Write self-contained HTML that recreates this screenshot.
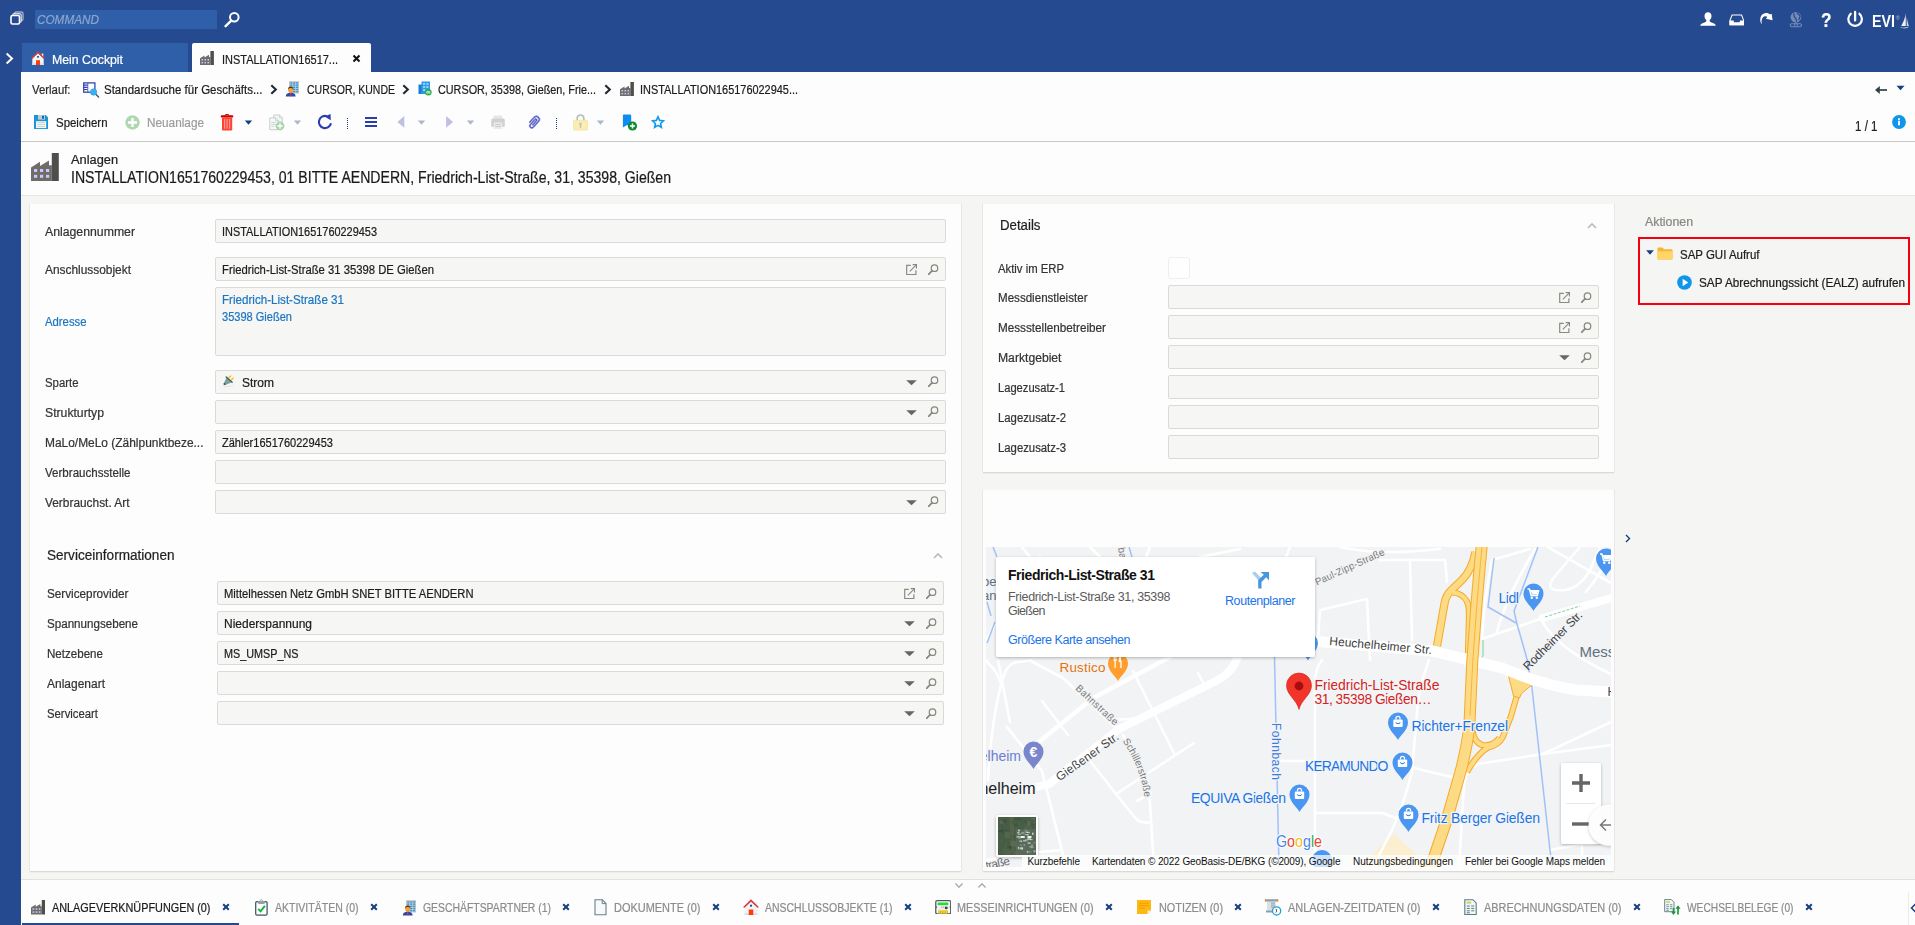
<!DOCTYPE html>
<html lang="de"><head><meta charset="utf-8"><title>Anlagen</title>
<style>
html,body{margin:0;padding:0;overflow:hidden}
body{width:1915px;height:925px;overflow:hidden;position:relative;background:#f5f5f3;font-family:"Liberation Sans", sans-serif;font-size:12px}
.a{position:absolute;display:block}
.t{position:absolute;white-space:pre;display:block;transform-origin:0 50%;-webkit-text-stroke:.22px}
</style></head><body>
<div class="a" style="left:0px;top:0px;width:1915px;height:72px;background:#254a8f;"></div>
<div class="a" style="left:0px;top:0px;width:21px;height:925px;background:#254a8f;"></div>
<div class="a" style="left:21px;top:72px;width:1894px;height:124px;background:#fdfdfd;"></div>
<div class="a" style="left:21px;top:141px;width:1894px;height:1px;background:#c9c7c3;"></div>
<div class="a" style="left:21px;top:195px;width:1894px;height:1px;background:#e6e5e2;"></div>
<svg class="a" style="left:10px;top:11px;" width="14" height="14" viewBox="0 0 14 14"><rect x="4.5" y="1" width="8.5" height="8.5" rx="1.5" fill="none" stroke="#fff" stroke-opacity=".55" stroke-width="1.4"/><rect x="2.7" y="2.7" width="8.5" height="8.5" rx="1.5" fill="#254a8f" stroke="#fff" stroke-opacity=".75" stroke-width="1.4"/><rect x="1" y="4.5" width="8.5" height="8.5" rx="1.5" fill="#254a8f" stroke="#fff" stroke-width="1.6"/></svg>
<div class="a" style="left:35px;top:10px;width:182px;height:19px;background:#2e5fa8;"></div>
<span class="t" style="left:37px;top:11.3px;font-size:12.5px;line-height:18px;color:#8ea5d0;font-style:italic;transform:scaleX(0.9398);">COMMAND</span>
<svg class="a" style="left:224px;top:11px;" width="17" height="17" viewBox="0 0 17 17"><circle cx="10.3" cy="6.3" r="4.3" fill="none" stroke="#fff" stroke-width="2"/><path d="M7.2 9.6 L1.6 15.2" stroke="#fff" stroke-width="2.4" stroke-linecap="round"/></svg>
<svg class="a" style="left:1699px;top:11px;" width="18" height="16" viewBox="0 0 18 16"><path d="M9 1.2c2.2 0 3.5 1.6 3.5 3.8 0 1.7-.8 3.3-1.8 4.1v1.1c0 .5 1 .9 3.2 1.7 1.6.6 2.6 1.3 2.9 2.9H1.200c.3-1.600 1.300-2.300 2.900-2.900 2.200-.8 3.200-1.200 3.200-1.700V9.100C6.300 8.300 5.500 6.700 5.500 5c0-2.200 1.300-3.800 3.500-3.800z" fill="#fff"/></svg>
<svg class="a" style="left:1728.5px;top:14.4px;" width="15.6" height="12" viewBox="0 0 17 13"><path d="M3.300 1.100h10.400l2.300 6v4.500H1V7.100z" fill="none" stroke="#fff" stroke-width="1.100" stroke-linejoin="round"/><path d="M.6 7h4.600v1.900h6.600V7h4.600v5.200H.6z" fill="#fff"/></svg>
<svg class="a" style="left:1758px;top:11px;" width="16" height="15" viewBox="0 0 16 15"><path d="M3.800 13.500C1 9.500 1.800 2.200 8 1.900c1.600 0 2.800.5 3.600 1.300l2.100-.2.900 6.200-6.700-1.500 1.500-1.800c-.8-.7-1.800-.9-2.800-.6-2.600.9-3.400 4.200-2.800 8.200z" fill="#fff"/></svg>
<svg class="a" style="left:1789px;top:11px;" width="14" height="17" viewBox="0 0 14 17"><g opacity=".36"><circle cx="6.900" cy="6.200" r="5.300" fill="#fff"/><path d="M4.500 2.500c1.500 1.500-.5 2.500 1.500 4s.5 3 2 4M8 1.500c.5 2 2.500 1.500 3 3.500s-1.500 2-1 4" fill="none" stroke="#254a8f" stroke-width="1.300"/><rect x="1.300" y="12.700" width="11.200" height="3" rx="1.500" fill="none" stroke="#fff" stroke-width="1.100"/><path d="M5.600 12.700v3M8.200 12.700v3" stroke="#fff" stroke-width="1"/><path d="M6.900 11.500v1.200" stroke="#fff" stroke-width="1.400"/></g></svg>
<span class="t" style="left:1820.5px;top:4.999999999999999px;font-size:21px;line-height:29px;color:#fff;font-weight:700;transform:scaleX(0.8185);">?</span>
<svg class="a" style="left:1846px;top:9.8px;" width="18" height="18" viewBox="0 0 18 18"><path d="M4.730 3.790A6.800 6.800 0 1 0 13.470 3.790" fill="none" stroke="#fff" stroke-width="2.200" stroke-linecap="round"/><path d="M9.100 1.900v8.500" stroke="#fff" stroke-width="2.300" stroke-linecap="round"/></svg>
<span class="t" style="left:1871.9px;top:9.5px;font-size:16.5px;line-height:23px;color:#fff;font-weight:700;transform:scaleX(0.8644);-webkit-text-stroke:0;">EVI</span>
<span class="t" style="left:1895.8px;top:13.8px;font-size:5.5px;line-height:8px;color:rgba(255,255,255,.62);-webkit-text-stroke:0;">®</span>
<svg class="a" style="left:1899px;top:12px;" width="11" height="17" viewBox="0 0 11 17"><path d="M6.700 1.300C6.200 5.500 4.600 10 2.200 13.900h4.600z" fill="#fff" opacity=".92"/><path d="M7.600 5c.6 3 1.300 6 2.200 8.900H7.700z" fill="#fff" opacity=".8"/><path d="M.6 15.300c3.200.7 6.800.3 9.800-.9-2.300 2.100-6.500 2.700-9.800.9z" fill="#fff"/></svg>
<svg class="a" style="left:5px;top:52px;" width="9" height="13" viewBox="0 0 9 13"><path d="M1.600 1.500L7 6.500 1.600 11.500" fill="none" stroke="#fff" stroke-width="2"/></svg>
<div class="a" style="left:22px;top:43px;width:166px;height:29px;background:#2e5fa8;"></div>
<div class="a" style="left:192px;top:43px;width:179px;height:29px;background:#fdfdfd;border-radius:2px 2px 0 0;"></div>
<svg class="a" style="left:31px;top:51px;" width="14" height="14" viewBox="0 0 14 14"><rect x="10.600" y="2.600" width="1.700" height="3.400" fill="#eef0f8"/><path d="M7 2.200L1.300 7.600V14h11.400V7.600z" fill="#f1f3fb"/><path d="M1.300 12.300h11.400V14H1.300z" fill="#dcdcf4"/><path d="M7 .3L.1 6.900l1 1L7 2.300l5.900 5.600 1-1z" fill="#d8403a"/><rect x="5" y="9.200" width="4" height="4.800" fill="#ff3d00"/><rect x="6.200" y="5" width="1.600" height="1.700" fill="#1c3f7c"/></svg>
<span class="t" style="left:52px;top:50.8px;font-size:12.5px;line-height:18px;color:#fff;transform:scaleX(0.9827);">Mein Cockpit</span>
<svg class="a" style="left:200px;top:51px;" width="14" height="14" viewBox="0 0 14 14"><path d="M0 14V7.300l4.500-2.900v2.100l4.500-2.700v2.300h1.400V14z" fill="#706d68"/><path d="M10.400 0h3.500v14h-3.500z" fill="#4e4e4c"/><g fill="#c8c8ff"><rect x="1.500" y="8" width="1.600" height="1.500"/><rect x="4.500" y="8" width="1.600" height="1.500"/><rect x="7.500" y="8" width="1.600" height="1.500"/><rect x="1.500" y="10.900" width="1.600" height="1.500"/><rect x="4.500" y="10.900" width="1.600" height="1.500"/><rect x="7.500" y="10.900" width="1.600" height="1.500"/></g></svg>
<span class="t" style="left:222px;top:50.8px;font-size:12.5px;line-height:18px;color:#1c1c1c;transform:scaleX(0.8772);">INSTALLATION16517...</span>
<svg class="a" style="left:352px;top:54px;" width="9" height="9" viewBox="0 0 9 9"><path d="M1.500 1.500l6 6M7.500 1.500l-6 6" stroke="#111" stroke-width="2"/></svg>
<span class="t" style="left:32px;top:81.3px;font-size:12.5px;line-height:18px;color:#2a2a2a;transform:scaleX(0.9082);">Verlauf:</span>
<svg class="a" style="left:83px;top:81.5px;" width="17" height="16" viewBox="0 0 17 16"><rect x=".7" y=".9" width="11.200" height="9.300" fill="#fff" stroke="#3545b0" stroke-width="1.300"/><path d="M4.800 1v9" stroke="#3545b0" stroke-width=".8"/><path d="M1 3.100h3.600M1 5.300h3.600M1 7.500h3.600" stroke="#3545b0" stroke-width="1.200"/><path d="M12 11.600l3.600 3.500" stroke="#4a5560" stroke-width="1.400" stroke-linecap="round"/><circle cx="10.600" cy="10" r="3.200" fill="#35b4f0" stroke="#2b9be0" stroke-width=".6"/></svg>
<span class="t" style="left:104px;top:81.3px;font-size:12.5px;line-height:18px;color:#1c1c1c;transform:scaleX(0.9198);">Standardsuche für Geschäfts...</span>
<svg class="a" style="left:270px;top:84px;" width="8" height="11" viewBox="0 0 8 11"><path d="M1.300 1.300L5.800 5.500 1.300 9.700" fill="none" stroke="#1f2933" stroke-width="2.100"/></svg>
<svg class="a" style="left:285px;top:80px;" width="14" height="17" viewBox="0 0 14 17"><rect x="4" y="1.200" width="10" height="12.300" fill="#c9c5bd"/><g fill="#1e9af0"><rect x="5.3" y="2.3" width="2" height="1.300"/><rect x="5.3" y="4.5" width="2" height="1.300"/><rect x="5.3" y="6.7" width="2" height="1.300"/><rect x="5.3" y="8.9" width="2" height="1.300"/><rect x="5.3" y="11.1" width="2" height="1.300"/><rect x="8.2" y="2.3" width="2" height="1.300"/><rect x="8.2" y="4.5" width="2" height="1.300"/><rect x="8.2" y="6.7" width="2" height="1.300"/><rect x="8.2" y="8.9" width="2" height="1.300"/><rect x="8.2" y="11.1" width="2" height="1.300"/><rect x="11.1" y="2.3" width="2" height="1.300"/><rect x="11.1" y="4.5" width="2" height="1.300"/><rect x="11.1" y="6.7" width="2" height="1.300"/><rect x="11.1" y="8.9" width="2" height="1.300"/><rect x="11.1" y="11.1" width="2" height="1.300"/></g><path d="M.8 16.600c0-2.600 1.600-3.800 4.900-3.800s4.900 1.200 4.900 3.800z" fill="#2848b8"/><path d="M5 12.900h1.400l-.2 3.400h-1z" fill="#e03a2a"/><circle cx="5.700" cy="10" r="2.600" fill="#f5a030"/><path d="M3 9.600c-.2-2.200 1.200-3.200 2.700-3.200s2.900 1 2.700 3.200c-.9-1.200-1.800-1.500-2.700-1.500s-1.800.3-2.700 1.500z" fill="#4e3422"/></svg>
<span class="t" style="left:306.5px;top:81.3px;font-size:12.5px;line-height:18px;color:#1c1c1c;transform:scaleX(0.8391);">CURSOR, KUNDE</span>
<svg class="a" style="left:402px;top:84px;" width="8" height="11" viewBox="0 0 8 11"><path d="M1.300 1.300L5.800 5.500 1.300 9.700" fill="none" stroke="#1f2933" stroke-width="2.100"/></svg>
<svg class="a" style="left:418px;top:81px;" width="14" height="15" viewBox="0 0 14 15"><rect x=".5" y="3.500" width="4.500" height="9.500" fill="#1e7fd0"/><rect x="3.500" y=".5" width="8.500" height="12.500" fill="#2f9ae8"/><g fill="#8fd0ff"><rect x="5" y="2" width="2.200" height="2"/><rect x="8.300" y="2" width="2.200" height="2"/><rect x="5" y="5" width="2.200" height="2"/><rect x="8.300" y="5" width="2.200" height="2"/><rect x="5" y="8" width="2.200" height="2"/></g><circle cx="10.300" cy="11.200" r="3.300" fill="#2cab4a"/><path d="M8.800 12.600v-2.200h3v2.200M9.700 12.600v-1h1.200v1" fill="none" stroke="#d9ffe0" stroke-width=".8"/></svg>
<span class="t" style="left:438px;top:81.3px;font-size:12.5px;line-height:18px;color:#1c1c1c;transform:scaleX(0.8648);">CURSOR, 35398, Gießen, Frie...</span>
<svg class="a" style="left:604px;top:84px;" width="8" height="11" viewBox="0 0 8 11"><path d="M1.300 1.300L5.800 5.500 1.300 9.700" fill="none" stroke="#1f2933" stroke-width="2.100"/></svg>
<svg class="a" style="left:620px;top:82px;" width="14" height="14" viewBox="0 0 14 14"><path d="M0 14V7.300l4.500-2.900v2.100l4.500-2.700v2.300h1.400V14z" fill="#706d68"/><path d="M10.400 0h3.500v14h-3.500z" fill="#4e4e4c"/><g fill="#c8c8ff"><rect x="1.500" y="8" width="1.600" height="1.500"/><rect x="4.500" y="8" width="1.600" height="1.500"/><rect x="7.500" y="8" width="1.600" height="1.500"/><rect x="1.500" y="10.900" width="1.600" height="1.500"/><rect x="4.500" y="10.900" width="1.600" height="1.500"/><rect x="7.500" y="10.900" width="1.600" height="1.500"/></g></svg>
<span class="t" style="left:640px;top:81.3px;font-size:12.5px;line-height:18px;color:#1c1c1c;transform:scaleX(0.8734);">INSTALLATION165176022945...</span>
<svg class="a" style="left:1874px;top:85px;" width="14" height="10" viewBox="0 0 14 10"><path d="M13 5H3.500" stroke="#2f4247" stroke-width="1.700"/><path d="M5.800 1L1 5l4.800 4z" fill="#2f4247"/></svg>
<svg class="a" style="left:1896px;top:85px;" width="9" height="6" viewBox="0 0 9 6"><path d="M.5 .8h8L4.500 5.200z" fill="#173f83"/></svg>
<svg class="a" style="left:34px;top:115px;" width="14" height="14" viewBox="0 0 14 14"><path d="M0 0h11.800L14 2.200V14H0z" fill="#1a96d8"/><rect x="4" y="0" width="7" height="4.600" fill="#c3cacd"/><rect x="8" y=".8" width="2" height="2.900" fill="#0d6c9c"/><rect x="2.100" y="6.200" width="10.100" height="6.900" fill="#fff"/><path d="M3.200 7.700h7.800M3.200 9.700h7.800M3.200 11.700h7.800" stroke="#b9c9c5" stroke-width=".9"/></svg>
<span class="t" style="left:56px;top:113.8px;font-size:12.5px;line-height:18px;color:#1c1c1c;transform:scaleX(0.9148);">Speichern</span>
<svg class="a" style="left:124.5px;top:114.5px;" width="15" height="15" viewBox="0 0 15 15"><circle cx="7.500" cy="7.500" r="7.200" fill="#b0d8b0"/><path d="M7.500 3v9M3 7.500h9" stroke="#fff" stroke-width="2.300"/></svg>
<span class="t" style="left:147px;top:113.8px;font-size:12.5px;line-height:18px;color:#9c9c9c;transform:scaleX(0.9426);">Neuanlage</span>
<svg class="a" style="left:220px;top:113.5px;" width="14" height="17" viewBox="0 0 14 17"><path d="M4.800 1.600c0-.8.600-1.100 2.200-1.100s2.200.3 2.200 1.100" fill="none" stroke="#d40000" stroke-width="1"/><rect x=".7" y="1.300" width="12.600" height="2.100" rx="1" fill="#cc0000"/><path d="M2 3.400h10.200v11.800c0 .8-.5 1.300-1.300 1.300H3.300c-.8 0-1.300-.5-1.300-1.300z" fill="#ff4232"/><path d="M4.600 5v9.800M7.100 5v9.800M9.600 5v9.800" stroke="#ff9a90" stroke-width="1.200"/></svg>
<svg class="a" style="left:244px;top:119.9px;" width="9" height="6" viewBox="0 0 9 6"><path d="M.8 .5h7.400L4.500 4.700z" fill="#10407f"/></svg>
<svg class="a" style="left:268.5px;top:113.5px;" width="17" height="17" viewBox="0 0 17 17"><path d="M4.800 .9h5.700l2.800 2.800v8.300H4.800z" fill="#f3f5f5" stroke="#c4cece" stroke-width=".9"/><path d="M10.500 .9v2.800h2.800" fill="none" stroke="#c4cece" stroke-width=".8"/><path d="M.8 3.900h5.700l2.800 2.800v9H.8z" fill="#f8fafa" stroke="#bcc8c8" stroke-width=".9"/><path d="M6.500 3.900v2.800h2.800" fill="none" stroke="#bcc8c8" stroke-width=".8"/><path d="M2.300 8.400h4.600M2.300 10.400h4.600M2.300 12.400h3" stroke="#c4cece" stroke-width=".9"/><circle cx="11" cy="12" r="4.400" fill="#a8d5a8"/><path d="M11 9.300v5.400M8.300 12h5.400" stroke="#fff" stroke-width="1.400"/></svg>
<svg class="a" style="left:293.2px;top:119.9px;" width="9" height="6" viewBox="0 0 9 6"><path d="M.8 .5h7.400L4.500 4.700z" fill="#a9b8d2"/></svg>
<svg class="a" style="left:317px;top:113px;" width="16" height="17" viewBox="0 0 16 17"><path d="M14 10.300A6.100 6.100 0 1 1 9.800 3.200" fill="none" stroke="#2a3eb0" stroke-width="2.100"/><path d="M7.600 3.600L13.500 .9l.3 6.300z" fill="#2a3eb0"/></svg>
<svg class="a" style="left:347px;top:118px;" width="1" height="12" viewBox="0 0 1 12"><rect x="0" y="0" width="1" height="1" fill="#0c4282"/><rect x="0" y="2" width="1" height="1" fill="#0c4282"/><rect x="0" y="4" width="1" height="1" fill="#0c4282"/><rect x="0" y="6" width="1" height="1" fill="#0c4282"/><rect x="0" y="8" width="1" height="1" fill="#0c4282"/><rect x="0" y="10" width="1" height="1" fill="#0c4282"/></svg>
<svg class="a" style="left:365px;top:116px;" width="13" height="12" viewBox="0 0 13 12"><path d="M0 2h12M0 6h12M0 10h12" stroke="#2a3eb0" stroke-width="2"/></svg>
<svg class="a" style="left:397px;top:116px;" width="8" height="12" viewBox="0 0 8 12"><path d="M7.300 0v11.800L.3 5.900z" fill="#bfc0e3"/></svg>
<svg class="a" style="left:417.1px;top:119.9px;" width="9" height="6" viewBox="0 0 9 6"><path d="M.8 .5h7.400L4.500 4.700z" fill="#a9b8d2"/></svg>
<svg class="a" style="left:446px;top:116px;" width="8" height="12" viewBox="0 0 8 12"><path d="M.1 0v11.800L7.100 5.900z" fill="#bfc0e3"/></svg>
<svg class="a" style="left:466px;top:119.9px;" width="9" height="6" viewBox="0 0 9 6"><path d="M.8 .5h7.400L4.500 4.700z" fill="#a9b8d2"/></svg>
<svg class="a" style="left:491px;top:114.5px;" width="14" height="15" viewBox="0 0 14 15"><rect x="2.600" y=".4" width="8.800" height="4" rx=".8" fill="#e6e6e6"/><rect x=".2" y="3.400" width="13.600" height="8.600" rx="1.600" fill="#d2d2d0"/><rect x="2.800" y="7.400" width="8.400" height="6.600" rx=".6" fill="#ececea"/><path d="M4.200 9.600h5.600M4.200 11.600h5.600" stroke="#c6c6c4" stroke-width=".9"/><circle cx="11.800" cy="5.200" r=".6" fill="#9fdcc0"/></svg>
<svg class="a" style="left:527px;top:114.5px;" width="14" height="14" viewBox="0 0 14 14"><g transform="rotate(42 7 7)" fill="none"><path d="M4 10.600V3.600a3 3 0 0 1 6 0v7.700a2 2 0 0 1-4 0V4.400a1 1 0 0 1 2 0v6.200" stroke="#9aa0e2" stroke-width="1.900"/><path d="M4 10.600V3.600a3 3 0 0 1 6 0v7.700a2 2 0 0 1-4 0V4.400a1 1 0 0 1 2 0v6.200" stroke="#3a44b4" stroke-width=".75"/></g></svg>
<svg class="a" style="left:556px;top:118px;" width="1" height="12" viewBox="0 0 1 12"><rect x="0" y="0" width="1" height="1" fill="#0c4282"/><rect x="0" y="2" width="1" height="1" fill="#0c4282"/><rect x="0" y="4" width="1" height="1" fill="#0c4282"/><rect x="0" y="6" width="1" height="1" fill="#0c4282"/><rect x="0" y="8" width="1" height="1" fill="#0c4282"/><rect x="0" y="10" width="1" height="1" fill="#0c4282"/></svg>
<svg class="a" style="left:572.5px;top:113.5px;" width="15" height="17" viewBox="0 0 15 17"><path d="M4.200 7V4.300a3.300 3.300 0 0 1 6.600 0V7" fill="none" stroke="#b4bcbc" stroke-width="1.700"/><rect x=".6" y="6.200" width="13.800" height="9.800" rx="1" fill="#fbeeb0" stroke="#f1e19c" stroke-width=".8"/><circle cx="7.500" cy="9.800" r="1.200" fill="#bcc4c8"/><path d="M7.500 10v3.400" stroke="#bcc4c8" stroke-width="1.500" stroke-linecap="round"/></svg>
<svg class="a" style="left:596.1px;top:119.9px;" width="9" height="6" viewBox="0 0 9 6"><path d="M.8 .5h7.400L4.500 4.700z" fill="#a9b8d2"/></svg>
<svg class="a" style="left:622px;top:113.5px;" width="17" height="18" viewBox="0 0 17 18"><path d="M.9 1.800C.9 .9 1.400 .5 2.200 .5h5.700c.8 0 1.300.4 1.300 1.300v11.700L5.050 11 .9 13.500z" fill="#0f8cf0"/><circle cx="10.500" cy="12" r="4.600" fill="#0c8a30"/><path d="M10.500 9.400v5.200M7.900 12h5.200" stroke="#fff" stroke-width="1.500"/></svg>
<svg class="a" style="left:651px;top:115px;" width="14" height="14" viewBox="0 0 14 14"><path d="M7 1.800l1.600 3.600 3.900.4-2.900 2.650.8 3.850L7 10.350 3.600 12.300l.8-3.850L1.500 5.800l3.900-.4z" fill="none" stroke="#0f9af0" stroke-width="1.600" stroke-linejoin="miter"/></svg>
<span class="t" style="left:1855px;top:115.5px;font-size:14px;line-height:20px;color:#222;transform:scaleX(0.8257);">1 / 1</span>
<svg class="a" style="left:1892px;top:115px;" width="14" height="14" viewBox="0 0 14 14"><circle cx="7" cy="7" r="6.900" fill="#0f95ea"/><rect x="6" y="5.700" width="2" height="4.600" fill="#e8f5ff"/><rect x="6" y="3.200" width="2" height="1.700" fill="#e8f5ff"/></svg>
<svg class="a" style="left:31px;top:153px;" width="28" height="28" viewBox="0 0 14 14"><path d="M0 14V7.300l4.500-2.900v2.100l4.500-2.700v2.300h1.400V14z" fill="#706d68"/><path d="M10.400 0h3.500v14h-3.500z" fill="#4e4e4c"/><g fill="#c8c8ff"><rect x="1.500" y="8" width="1.600" height="1.500"/><rect x="4.500" y="8" width="1.600" height="1.500"/><rect x="7.500" y="8" width="1.600" height="1.500"/><rect x="1.500" y="10.900" width="1.600" height="1.500"/><rect x="4.500" y="10.900" width="1.600" height="1.500"/><rect x="7.500" y="10.900" width="1.600" height="1.500"/></g></svg>
<span class="t" style="left:71px;top:151.3px;font-size:12.5px;line-height:18px;color:#222;transform:scaleX(1.0245);">Anlagen</span>
<span class="t" style="left:71px;top:167.3px;font-size:16px;line-height:22px;color:#1a1a1a;transform:scaleX(0.8804);">INSTALLATION1651760229453, 01 BITTE AENDERN, Friedrich-List-Straße, 31, 35398, Gießen</span>
<div class="a" style="left:30px;top:204px;width:931px;height:667px;background:#fdfdfd;box-shadow:1px 0 0 #e9e7e4,-1px 0 0 #e9e7e4,0 1px 0 #dcdad6,0 2px 1px rgba(0,0,0,.03);"></div>
<div class="a" style="left:215px;top:219px;width:731px;height:24px;background:#f6f6f4;border:1px solid #dcdad6;box-sizing:border-box;border-radius:2px;"></div>
<span class="t" style="left:45px;top:223.3px;font-size:12.5px;line-height:18px;color:#333333;transform:scaleX(0.9813);">Anlagennummer</span>
<span class="t" style="left:222px;top:223.3px;font-size:12.5px;line-height:18px;color:#1c1c1c;transform:scaleX(0.8735);">INSTALLATION1651760229453</span>
<div class="a" style="left:215px;top:257px;width:731px;height:24px;background:#f6f6f4;border:1px solid #dcdad6;box-sizing:border-box;border-radius:2px;"></div>
<span class="t" style="left:45px;top:261.3px;font-size:12.5px;line-height:18px;color:#333333;transform:scaleX(0.9521);">Anschlussobjekt</span>
<span class="t" style="left:222px;top:261.3px;font-size:12.5px;line-height:18px;color:#1c1c1c;transform:scaleX(0.9028);">Friedrich-List-Straße 31 35398 DE Gießen</span>
<svg class="a" style="left:905.5px;top:263.5px;" width="11" height="11" viewBox="0 0 11 11"><path d="M4.800 1.300H.7v9.200h9.200V6.200" fill="none" stroke="#8a8680" stroke-width="1.150"/><path d="M6.700 .6h3.800v3.800" fill="none" stroke="#8a8680" stroke-width="1.150"/><path d="M10.300 .8L3.800 7.300" stroke="#8a8680" stroke-width="1.100"/></svg>
<svg class="a" style="left:927.5px;top:263.5px;" width="11" height="11" viewBox="0 0 11 11"><circle cx="6.500" cy="4.200" r="3.250" fill="none" stroke="#8a8680" stroke-width="1.250"/><path d="M4.100 6.700L.6 10.300" stroke="#8a8680" stroke-width="1.700" stroke-linecap="round"/></svg>
<div class="a" style="left:215px;top:287px;width:731px;height:69px;background:#f6f6f4;border:1px solid #dcdad6;box-sizing:border-box;border-radius:2px;"></div>
<span class="t" style="left:45px;top:313.3px;font-size:12.5px;line-height:18px;color:#1b76c4;transform:scaleX(0.9049);">Adresse</span>
<span class="t" style="left:222px;top:291.1px;font-size:12.5px;line-height:18px;color:#1b76c4;transform:scaleX(0.9292);">Friedrich-List-Straße 31</span>
<span class="t" style="left:222px;top:308.2px;font-size:12.5px;line-height:18px;color:#1b76c4;transform:scaleX(0.8835);">35398 Gießen</span>
<div class="a" style="left:215px;top:370px;width:731px;height:24px;background:#f6f6f4;border:1px solid #dcdad6;box-sizing:border-box;border-radius:2px;"></div>
<span class="t" style="left:45px;top:374.3px;font-size:12.5px;line-height:18px;color:#333333;transform:scaleX(0.9092);">Sparte</span>
<span class="t" style="left:242px;top:374.3px;font-size:12.5px;line-height:18px;color:#1c1c1c;transform:scaleX(0.9597);">Strom</span>
<svg class="a" style="left:905.5px;top:380px;" width="11" height="6" viewBox="0 0 11 6"><path d="M.2 .3h10.600L5.500 5.300z" fill="#666"/></svg>
<svg class="a" style="left:927.5px;top:376.0px;" width="11" height="11" viewBox="0 0 11 11"><circle cx="6.500" cy="4.200" r="3.250" fill="none" stroke="#8a8680" stroke-width="1.250"/><path d="M4.100 6.700L.6 10.300" stroke="#8a8680" stroke-width="1.700" stroke-linecap="round"/></svg>
<div class="a" style="left:215px;top:400px;width:731px;height:24px;background:#f6f6f4;border:1px solid #dcdad6;box-sizing:border-box;border-radius:2px;"></div>
<span class="t" style="left:45px;top:404.3px;font-size:12.5px;line-height:18px;color:#333333;transform:scaleX(0.9762);">Strukturtyp</span>
<svg class="a" style="left:905.5px;top:410px;" width="11" height="6" viewBox="0 0 11 6"><path d="M.2 .3h10.600L5.500 5.300z" fill="#666"/></svg>
<svg class="a" style="left:927.5px;top:406.0px;" width="11" height="11" viewBox="0 0 11 11"><circle cx="6.500" cy="4.200" r="3.250" fill="none" stroke="#8a8680" stroke-width="1.250"/><path d="M4.100 6.700L.6 10.300" stroke="#8a8680" stroke-width="1.700" stroke-linecap="round"/></svg>
<div class="a" style="left:215px;top:430px;width:731px;height:24px;background:#f6f6f4;border:1px solid #dcdad6;box-sizing:border-box;border-radius:2px;"></div>
<span class="t" style="left:45px;top:434.3px;font-size:12.5px;line-height:18px;color:#333333;transform:scaleX(0.9544);">MaLo/MeLo (Zählpunktbeze...</span>
<span class="t" style="left:222px;top:434.3px;font-size:12.5px;line-height:18px;color:#1c1c1c;transform:scaleX(0.8823);">Zähler1651760229453</span>
<div class="a" style="left:215px;top:460px;width:731px;height:24px;background:#f6f6f4;border:1px solid #dcdad6;box-sizing:border-box;border-radius:2px;"></div>
<span class="t" style="left:45px;top:464.3px;font-size:12.5px;line-height:18px;color:#333333;transform:scaleX(0.9251);">Verbrauchsstelle</span>
<div class="a" style="left:215px;top:490px;width:731px;height:24px;background:#f6f6f4;border:1px solid #dcdad6;box-sizing:border-box;border-radius:2px;"></div>
<span class="t" style="left:45px;top:494.3px;font-size:12.5px;line-height:18px;color:#333333;transform:scaleX(0.9501);">Verbrauchst. Art</span>
<svg class="a" style="left:905.5px;top:500px;" width="11" height="6" viewBox="0 0 11 6"><path d="M.2 .3h10.600L5.500 5.300z" fill="#666"/></svg>
<svg class="a" style="left:927.5px;top:496.0px;" width="11" height="11" viewBox="0 0 11 11"><circle cx="6.500" cy="4.200" r="3.250" fill="none" stroke="#8a8680" stroke-width="1.250"/><path d="M4.100 6.700L.6 10.300" stroke="#8a8680" stroke-width="1.700" stroke-linecap="round"/></svg>
<svg class="a" style="left:222px;top:375px;" width="12" height="13" viewBox="0 0 12 13"><path d="M1.300 10.600Q.8 12.300 5.500 11.700T11 10.200" fill="none" stroke="#dde4e4" stroke-width=".9"/><path d="M6.700 2.600L8.700 1M9.200 5L11.100 3.300" stroke="#ffc020" stroke-width="1.500" stroke-linecap="round"/><path d="M4.600 2.600L9.500 7.400 3.200 10 1.700 8.500z" fill="#7ea0a0"/><path d="M4.200 1.900L10.100 7.300" stroke="#3d6060" stroke-width="1.400" stroke-linecap="round"/><circle cx="2.600" cy="9.100" r="1.150" fill="#3d6060"/></svg>
<span class="t" style="left:47px;top:545.0999999999999px;font-size:14px;line-height:20px;color:#1f1f1f;transform:scaleX(0.9695);">Serviceinformationen</span>
<svg class="a" style="left:933px;top:552.2px;" width="10" height="8" viewBox="0 0 10 8"><path d="M1 6l4-4 4 4" fill="none" stroke="#bdbab5" stroke-width="1.600"/></svg>
<div class="a" style="left:217px;top:581px;width:727px;height:24px;background:#f6f6f4;border:1px solid #dcdad6;box-sizing:border-box;border-radius:2px;"></div>
<span class="t" style="left:47px;top:585.3px;font-size:12.5px;line-height:18px;color:#333333;transform:scaleX(0.9385);">Serviceprovider</span>
<span class="t" style="left:224px;top:585.3px;font-size:12.5px;line-height:18px;color:#1c1c1c;transform:scaleX(0.8964);">Mittelhessen Netz GmbH SNET BITTE AENDERN</span>
<svg class="a" style="left:903.5px;top:587.5px;" width="11" height="11" viewBox="0 0 11 11"><path d="M4.800 1.300H.7v9.200h9.200V6.200" fill="none" stroke="#8a8680" stroke-width="1.150"/><path d="M6.700 .6h3.800v3.800" fill="none" stroke="#8a8680" stroke-width="1.150"/><path d="M10.300 .8L3.800 7.300" stroke="#8a8680" stroke-width="1.100"/></svg>
<svg class="a" style="left:925.5px;top:587.5px;" width="11" height="11" viewBox="0 0 11 11"><circle cx="6.500" cy="4.200" r="3.250" fill="none" stroke="#8a8680" stroke-width="1.250"/><path d="M4.100 6.700L.6 10.300" stroke="#8a8680" stroke-width="1.700" stroke-linecap="round"/></svg>
<div class="a" style="left:217px;top:611px;width:727px;height:24px;background:#f6f6f4;border:1px solid #dcdad6;box-sizing:border-box;border-radius:2px;"></div>
<span class="t" style="left:47px;top:615.3px;font-size:12.5px;line-height:18px;color:#333333;transform:scaleX(0.9284);">Spannungsebene</span>
<span class="t" style="left:224px;top:615.3px;font-size:12.5px;line-height:18px;color:#1c1c1c;transform:scaleX(0.9591);">Niederspannung</span>
<svg class="a" style="left:903.5px;top:621px;" width="11" height="6" viewBox="0 0 11 6"><path d="M.2 .3h10.600L5.500 5.300z" fill="#666"/></svg>
<svg class="a" style="left:925.5px;top:617.5px;" width="11" height="11" viewBox="0 0 11 11"><circle cx="6.500" cy="4.200" r="3.250" fill="none" stroke="#8a8680" stroke-width="1.250"/><path d="M4.100 6.700L.6 10.300" stroke="#8a8680" stroke-width="1.700" stroke-linecap="round"/></svg>
<div class="a" style="left:217px;top:641px;width:727px;height:24px;background:#f6f6f4;border:1px solid #dcdad6;box-sizing:border-box;border-radius:2px;"></div>
<span class="t" style="left:47px;top:645.3px;font-size:12.5px;line-height:18px;color:#333333;transform:scaleX(0.9261);">Netzebene</span>
<span class="t" style="left:224px;top:645.3px;font-size:12.5px;line-height:18px;color:#1c1c1c;transform:scaleX(0.8649);">MS_UMSP_NS</span>
<svg class="a" style="left:903.5px;top:651px;" width="11" height="6" viewBox="0 0 11 6"><path d="M.2 .3h10.600L5.500 5.300z" fill="#666"/></svg>
<svg class="a" style="left:925.5px;top:647.5px;" width="11" height="11" viewBox="0 0 11 11"><circle cx="6.500" cy="4.200" r="3.250" fill="none" stroke="#8a8680" stroke-width="1.250"/><path d="M4.100 6.700L.6 10.300" stroke="#8a8680" stroke-width="1.700" stroke-linecap="round"/></svg>
<div class="a" style="left:217px;top:671px;width:727px;height:24px;background:#f6f6f4;border:1px solid #dcdad6;box-sizing:border-box;border-radius:2px;"></div>
<span class="t" style="left:47px;top:675.3px;font-size:12.5px;line-height:18px;color:#333333;transform:scaleX(0.9592);">Anlagenart</span>
<svg class="a" style="left:903.5px;top:681px;" width="11" height="6" viewBox="0 0 11 6"><path d="M.2 .3h10.600L5.500 5.300z" fill="#666"/></svg>
<svg class="a" style="left:925.5px;top:677.5px;" width="11" height="11" viewBox="0 0 11 11"><circle cx="6.500" cy="4.200" r="3.250" fill="none" stroke="#8a8680" stroke-width="1.250"/><path d="M4.100 6.700L.6 10.300" stroke="#8a8680" stroke-width="1.700" stroke-linecap="round"/></svg>
<div class="a" style="left:217px;top:701px;width:727px;height:24px;background:#f6f6f4;border:1px solid #dcdad6;box-sizing:border-box;border-radius:2px;"></div>
<span class="t" style="left:47px;top:705.3px;font-size:12.5px;line-height:18px;color:#333333;transform:scaleX(0.9062);">Serviceart</span>
<svg class="a" style="left:903.5px;top:711px;" width="11" height="6" viewBox="0 0 11 6"><path d="M.2 .3h10.600L5.500 5.300z" fill="#666"/></svg>
<svg class="a" style="left:925.5px;top:707.5px;" width="11" height="11" viewBox="0 0 11 11"><circle cx="6.500" cy="4.200" r="3.250" fill="none" stroke="#8a8680" stroke-width="1.250"/><path d="M4.100 6.700L.6 10.300" stroke="#8a8680" stroke-width="1.700" stroke-linecap="round"/></svg>
<div class="a" style="left:983px;top:204px;width:631px;height:268px;background:#fdfdfd;box-shadow:1px 0 0 #e9e7e4,-1px 0 0 #e9e7e4,0 1px 0 #dcdad6,0 2px 1px rgba(0,0,0,.03);"></div>
<span class="t" style="left:1000px;top:215.10000000000002px;font-size:14px;line-height:20px;color:#1f1f1f;transform:scaleX(0.9463);">Details</span>
<svg class="a" style="left:1587px;top:221.5px;" width="10" height="8" viewBox="0 0 10 8"><path d="M1 6l4-4 4 4" fill="none" stroke="#bdbab5" stroke-width="1.600"/></svg>
<span class="t" style="left:998px;top:260.3px;font-size:12.5px;line-height:18px;color:#333333;transform:scaleX(0.9049);">Aktiv im ERP</span>
<div class="a" style="left:1168px;top:257px;width:22px;height:22px;background:#fefefe;border:1px solid #f0efed;box-sizing:border-box;border-radius:3px;"></div>
<div class="a" style="left:1168px;top:285px;width:431px;height:24px;background:#f6f6f4;border:1px solid #dcdad6;box-sizing:border-box;border-radius:2px;"></div>
<span class="t" style="left:998px;top:289.3px;font-size:12.5px;line-height:18px;color:#333333;transform:scaleX(0.9267);">Messdienstleister</span>
<svg class="a" style="left:1558.5px;top:291.5px;" width="11" height="11" viewBox="0 0 11 11"><path d="M4.800 1.300H.7v9.200h9.200V6.200" fill="none" stroke="#8a8680" stroke-width="1.150"/><path d="M6.700 .6h3.800v3.800" fill="none" stroke="#8a8680" stroke-width="1.150"/><path d="M10.300 .8L3.800 7.300" stroke="#8a8680" stroke-width="1.100"/></svg>
<svg class="a" style="left:1580.5px;top:291.5px;" width="11" height="11" viewBox="0 0 11 11"><circle cx="6.500" cy="4.200" r="3.250" fill="none" stroke="#8a8680" stroke-width="1.250"/><path d="M4.100 6.700L.6 10.300" stroke="#8a8680" stroke-width="1.700" stroke-linecap="round"/></svg>
<div class="a" style="left:1168px;top:315px;width:431px;height:24px;background:#f6f6f4;border:1px solid #dcdad6;box-sizing:border-box;border-radius:2px;"></div>
<span class="t" style="left:998px;top:319.3px;font-size:12.5px;line-height:18px;color:#333333;transform:scaleX(0.9363);">Messstellenbetreiber</span>
<svg class="a" style="left:1558.5px;top:321.5px;" width="11" height="11" viewBox="0 0 11 11"><path d="M4.800 1.300H.7v9.200h9.200V6.200" fill="none" stroke="#8a8680" stroke-width="1.150"/><path d="M6.700 .6h3.800v3.800" fill="none" stroke="#8a8680" stroke-width="1.150"/><path d="M10.300 .8L3.800 7.300" stroke="#8a8680" stroke-width="1.100"/></svg>
<svg class="a" style="left:1580.5px;top:321.5px;" width="11" height="11" viewBox="0 0 11 11"><circle cx="6.500" cy="4.200" r="3.250" fill="none" stroke="#8a8680" stroke-width="1.250"/><path d="M4.100 6.700L.6 10.300" stroke="#8a8680" stroke-width="1.700" stroke-linecap="round"/></svg>
<div class="a" style="left:1168px;top:345px;width:431px;height:24px;background:#f6f6f4;border:1px solid #dcdad6;box-sizing:border-box;border-radius:2px;"></div>
<span class="t" style="left:998px;top:349.3px;font-size:12.5px;line-height:18px;color:#333333;transform:scaleX(0.9722);">Marktgebiet</span>
<svg class="a" style="left:1558.5px;top:355px;" width="11" height="6" viewBox="0 0 11 6"><path d="M.2 .3h10.600L5.500 5.300z" fill="#666"/></svg>
<svg class="a" style="left:1580.5px;top:351.5px;" width="11" height="11" viewBox="0 0 11 11"><circle cx="6.500" cy="4.200" r="3.250" fill="none" stroke="#8a8680" stroke-width="1.250"/><path d="M4.100 6.700L.6 10.300" stroke="#8a8680" stroke-width="1.700" stroke-linecap="round"/></svg>
<div class="a" style="left:1168px;top:375px;width:431px;height:24px;background:#f6f6f4;border:1px solid #dcdad6;box-sizing:border-box;border-radius:2px;"></div>
<span class="t" style="left:998px;top:379.3px;font-size:12.5px;line-height:18px;color:#333333;transform:scaleX(0.8926);">Lagezusatz-1</span>
<div class="a" style="left:1168px;top:405px;width:431px;height:24px;background:#f6f6f4;border:1px solid #dcdad6;box-sizing:border-box;border-radius:2px;"></div>
<span class="t" style="left:998px;top:409.3px;font-size:12.5px;line-height:18px;color:#333333;transform:scaleX(0.9059);">Lagezusatz-2</span>
<div class="a" style="left:1168px;top:435px;width:431px;height:24px;background:#f6f6f4;border:1px solid #dcdad6;box-sizing:border-box;border-radius:2px;"></div>
<span class="t" style="left:998px;top:439.3px;font-size:12.5px;line-height:18px;color:#333333;transform:scaleX(0.9059);">Lagezusatz-3</span>
<span class="t" style="left:1645px;top:213.0px;font-size:12.5px;line-height:18px;color:#8a8680;transform:scaleX(0.9865);">Aktionen</span>
<div class="a" style="left:1638px;top:237px;width:272px;height:68px;border:2px solid #f6000f;box-sizing:border-box;"></div>
<svg class="a" style="left:1646px;top:249.7px;" width="8" height="5" viewBox="0 0 8 5"><path d="M.2 .3h7.600L4 4.700z" fill="#173f83"/></svg>
<svg class="a" style="left:1657px;top:247px;" width="16" height="13" viewBox="0 0 16 13"><path d="M.5 1.500C.5 .9.900.5 1.500.5h4l1.500 1.700h7.500c.6 0 1 .4 1 1v8.300c0 .6-.4 1-1 1h-13c-.6 0-1-.4-1-1z" fill="#f2b535"/><path d="M.5 4.200h15v7.300c0 .6-.4 1-1 1h-13c-.6 0-1-.4-1-1z" fill="#ffd568"/></svg>
<span class="t" style="left:1680px;top:246.3px;font-size:12.5px;line-height:18px;color:#1c1c1c;transform:scaleX(0.9177);">SAP GUI Aufruf</span>
<svg class="a" style="left:1676.6px;top:274.7px;" width="15" height="15" viewBox="0 0 15 15"><circle cx="7.500" cy="7.500" r="7.300" fill="#0f95ea"/><path d="M5.600 3.800v7.400L11.300 7.500z" fill="#fff"/></svg>
<span class="t" style="left:1699px;top:274.3px;font-size:12.5px;line-height:18px;color:#1c1c1c;transform:scaleX(0.9392);">SAP Abrechnungssicht (EALZ) aufrufen</span>
<svg class="a" style="left:1625px;top:534px;" width="6" height="9" viewBox="0 0 6 9"><path d="M1 1l3.500 3.500L1 8" fill="none" stroke="#173f83" stroke-width="1.400"/></svg>
<div class="a" style="left:983px;top:490px;width:631px;height:381px;background:#fdfdfd;box-shadow:1px 0 0 #e9e7e4,-1px 0 0 #e9e7e4,0 1px 0 #dcdad6,0 2px 1px rgba(0,0,0,.03);"></div>
<svg class="a" style="left:986px;top:547px" width="625" height="320" viewBox="986 547 625 320"><defs><filter id="sh" x="-20%" y="-20%" width="140%" height="150%"><feDropShadow dx="0" dy="1" stdDeviation="1.600" flood-color="#000" flood-opacity=".28"/></filter><clipPath id="mc"><rect x="986" y="547" width="625" height="320"/></clipPath></defs><g clip-path="url(#mc)"><rect x="986" y="547" width="625" height="320" fill="#f1f3f4"/><path d="M1359 867L1394 834L1430 867z" fill="#fcefcf"/><path d="M988 780C990 740 996 700 1003 678S1020 664 1031 660" fill="none" stroke="#fff" stroke-width="2.6" stroke-linecap="round" stroke-linejoin="round"/><path d="M998 660L1010 722" fill="none" stroke="#fff" stroke-width="2.6" stroke-linecap="round" stroke-linejoin="round"/><path d="M1031 661L1063 678L1116 728" fill="none" stroke="#fff" stroke-width="2.6" stroke-linecap="round" stroke-linejoin="round"/><path d="M1123 735L1147 778L1150 804L1154 867" fill="none" stroke="#fff" stroke-width="2.6" stroke-linecap="round" stroke-linejoin="round"/><path d="M1042 701L1068 735" fill="none" stroke="#fff" stroke-width="2.6" stroke-linecap="round" stroke-linejoin="round"/><path d="M1007 727L1042 771L1066 867" fill="none" stroke="#fff" stroke-width="2.6" stroke-linecap="round" stroke-linejoin="round"/><path d="M1133 671L1175 755" fill="none" stroke="#fff" stroke-width="2.6" stroke-linecap="round" stroke-linejoin="round"/><path d="M1194 743L1116 794" fill="none" stroke="#fff" stroke-width="2.6" stroke-linecap="round" stroke-linejoin="round"/><path d="M1091 762L1116 794L1137 820Q1144 824 1151 822" fill="none" stroke="#fff" stroke-width="2.6" stroke-linecap="round" stroke-linejoin="round"/><path d="M1137 801L1151 793" fill="none" stroke="#fff" stroke-width="2.6" stroke-linecap="round" stroke-linejoin="round"/><path d="M1114 719Q1135 722 1154 709" fill="none" stroke="#fff" stroke-width="2.6" stroke-linecap="round" stroke-linejoin="round"/><path d="M1198 673L1204 684" fill="none" stroke="#fff" stroke-width="2.6" stroke-linecap="round" stroke-linejoin="round"/><path d="M1281 761L1315 761" fill="none" stroke="#fff" stroke-width="2.6" stroke-linecap="round" stroke-linejoin="round"/><path d="M986 860L1040 852L1062 850" fill="none" stroke="#fff" stroke-width="2.6" stroke-linecap="round" stroke-linejoin="round"/><path d="M986 640L1010 600L1040 557" fill="none" stroke="#fff" stroke-width="2.6" stroke-linecap="round" stroke-linejoin="round"/><path d="M1022 547L1030 557" fill="none" stroke="#fff" stroke-width="2.6" stroke-linecap="round" stroke-linejoin="round"/><path d="M1090 547L1100 557" fill="none" stroke="#fff" stroke-width="2.6" stroke-linecap="round" stroke-linejoin="round"/><path d="M1150 547L1146 557" fill="none" stroke="#fff" stroke-width="2.6" stroke-linecap="round" stroke-linejoin="round"/><path d="M1200 557L1240 549" fill="none" stroke="#fff" stroke-width="2.6" stroke-linecap="round" stroke-linejoin="round"/><path d="M1290 547L1286 557" fill="none" stroke="#fff" stroke-width="2.6" stroke-linecap="round" stroke-linejoin="round"/><path d="M986 660L996 672L1004 690" fill="none" stroke="#fff" stroke-width="2.6" stroke-linecap="round" stroke-linejoin="round"/><path d="M1322 660Q1316 668 1315 680L1315 867" fill="none" stroke="#fff" stroke-width="2.6" stroke-linecap="round" stroke-linejoin="round"/><path d="M1429 660Q1418 690 1417 712L1412 771Q1404 805 1391 832L1373 867" fill="none" stroke="#fff" stroke-width="2.6" stroke-linecap="round" stroke-linejoin="round"/><path d="M1315 813L1382 813L1396 818" fill="none" stroke="#fff" stroke-width="2.6" stroke-linecap="round" stroke-linejoin="round"/><path d="M1414 768L1452 777" fill="none" stroke="#fff" stroke-width="2.6" stroke-linecap="round" stroke-linejoin="round"/><path d="M1459 867L1464 785Q1466 768 1478 764L1543 754L1611 722" fill="none" stroke="#fff" stroke-width="2.6" stroke-linecap="round" stroke-linejoin="round"/><path d="M1543 754L1611 745" fill="none" stroke="#fff" stroke-width="2.6" stroke-linecap="round" stroke-linejoin="round"/><path d="M1550 850L1582 844L1611 842" fill="none" stroke="#fff" stroke-width="2.6" stroke-linecap="round" stroke-linejoin="round"/><path d="M1582 844L1582 867" fill="none" stroke="#fff" stroke-width="2.6" stroke-linecap="round" stroke-linejoin="round"/><path d="M1320 610L1367 599L1370 660" fill="none" stroke="#fff" stroke-width="2.6" stroke-linecap="round" stroke-linejoin="round"/><path d="M1320 610L1318 640" fill="none" stroke="#fff" stroke-width="2.6" stroke-linecap="round" stroke-linejoin="round"/><path d="M1380 560L1445 560L1447 582" fill="none" stroke="#fff" stroke-width="2.6" stroke-linecap="round" stroke-linejoin="round"/><path d="M1410 560L1412 640" fill="none" stroke="#fff" stroke-width="2.6" stroke-linecap="round" stroke-linejoin="round"/><path d="M1340 547Q1380 556 1440 549" fill="none" stroke="#fff" stroke-width="2.6" stroke-linecap="round" stroke-linejoin="round"/><path d="M1482 639L1543 618" fill="none" stroke="#fff" stroke-width="2.6" stroke-linecap="round" stroke-linejoin="round"/><path d="M1482 639Q1484 600 1492 560L1530 549" fill="none" stroke="#fff" stroke-width="2.6" stroke-linecap="round" stroke-linejoin="round"/><path d="M1497 632Q1505 600 1535 549" fill="none" stroke="#fff" stroke-width="2.6" stroke-linecap="round" stroke-linejoin="round"/><path d="M1543 623Q1560 650 1611 674" fill="none" stroke="#fff" stroke-width="2.6" stroke-linecap="round" stroke-linejoin="round"/><path d="M1548 547L1611 583" fill="none" stroke="#fff" stroke-width="2.6" stroke-linecap="round" stroke-linejoin="round"/><path d="M1580 547Q1560 570 1552 580Q1545 592 1565 590Q1580 588 1590 570L1600 547" fill="none" stroke="#fff" stroke-width="2.6" stroke-linecap="round" stroke-linejoin="round"/><path d="M1586 592Q1596 580 1604 566" fill="none" stroke="#fff" stroke-width="2.6" stroke-linecap="round" stroke-linejoin="round"/><path d="M1040 741L1093 698L1170 657" fill="none" stroke="#fff" stroke-width="4.5" stroke-linecap="round" stroke-linejoin="round"/><path d="M1543 618L1611 598" fill="none" stroke="#fff" stroke-width="8" stroke-linecap="round" stroke-linejoin="round"/><path d="M986 792Q1020 792 1049 784L1119 729L1216 681Q1234 672 1238 655" fill="none" stroke="#fff" stroke-width="8" stroke-linecap="round" stroke-linejoin="round"/><path d="M1538 547L1514 611L1517 624L1527 659L1532 688L1550 850L1552 867" fill="none" stroke="#a1c2f8" stroke-width="1.500"/><path d="M1494 558L1488 607L1516 623" fill="none" stroke="#a1c2f8" stroke-width="1.500"/><path d="M1274.500 657L1279 867" fill="none" stroke="#a1c2f8" stroke-width="1.500"/><path d="M993 547L997 557" fill="none" stroke="#a1c2f8" stroke-width="1.500"/><path d="M987 602L991 616" fill="none" stroke="#a1c2f8" stroke-width="1.500"/><path d="M995 622L987 643" fill="none" stroke="#a1c2f8" stroke-width="1.500"/><path d="M1129 547L1132 557" fill="none" stroke="#a1c2f8" stroke-width="1.500"/><path d="M1483 640L1483 656L1479 660" fill="none" stroke="#7fcf9a" stroke-width="1"/><path d="M1545 617L1580 606" fill="none" stroke="#7fcf9a" stroke-width="1" stroke-dasharray="3 1.5"/><path d="M1437 646L1444.600 603Q1446 595 1452 589.500L1462 580Q1472 570 1475.500 552" fill="none" stroke="#f7a928" stroke-width="8.2" stroke-linecap="butt" stroke-linejoin="round"/><path d="M1452.500 592.500Q1462 593 1466.700 601Q1469.300 606 1469 616L1468 653" fill="none" stroke="#f7a928" stroke-width="6.2" stroke-linecap="butt" stroke-linejoin="round"/><path d="M1518 692L1510.800 716.700L1502.800 737Q1499 745 1488 747.500Q1477 754 1467 772" fill="none" stroke="#f7a928" stroke-width="6.2" stroke-linecap="butt" stroke-linejoin="round"/><path d="M1472.500 731Q1474 742 1482 745Q1492 747 1499.500 738" fill="none" stroke="#f7a928" stroke-width="6.2" stroke-linecap="butt" stroke-linejoin="round"/><path d="M1437 646L1444.600 603Q1446 595 1452 589.500L1462 580Q1472 570 1475.500 552" fill="none" stroke="#fddb85" stroke-width="6.2" stroke-linecap="butt" stroke-linejoin="round"/><path d="M1452.500 592.500Q1462 593 1466.700 601Q1469.300 606 1469 616L1468 653" fill="none" stroke="#fddb85" stroke-width="4.2" stroke-linecap="butt" stroke-linejoin="round"/><path d="M1518 692L1510.800 716.700L1502.800 737Q1499 745 1488 747.500Q1477 754 1467 772" fill="none" stroke="#fddb85" stroke-width="4.2" stroke-linecap="butt" stroke-linejoin="round"/><path d="M1472.500 731Q1474 742 1482 745Q1492 747 1499.500 738" fill="none" stroke="#fddb85" stroke-width="4.2" stroke-linecap="butt" stroke-linejoin="round"/><path d="M1508.500 676L1533 684L1521.500 693.500L1519.500 698L1513.500 696z" fill="#fddb85" stroke="#f7a928" stroke-width="1"/><path d="M1300 640L1432 651L1502 668Q1540 684 1576 690L1611 692" fill="none" stroke="#fff" stroke-width="11" stroke-linecap="round" stroke-linejoin="round"/><path d="M1522 674L1532 681" fill="none" stroke="#fff" stroke-width="8" stroke-linecap="round" stroke-linejoin="round"/><path d="M1481.700 546Q1478.500 580 1476.600 603L1472.300 661L1469.300 728Q1466 752 1460 773.500L1447 819L1434.800 855L1430 869" fill="none" stroke="#f7a928" stroke-width="12" stroke-linejoin="round"/><path d="M1481.700 546Q1478.500 580 1476.600 603L1472.300 661L1469.300 728Q1466 752 1460 773.500L1447 819L1434.800 855L1430 869" fill="none" stroke="#fddb85" stroke-width="10" stroke-linejoin="round"/><path d="M1482 546Q1479 580 1477 603L1472.800 661L1470 716" fill="none" stroke="#f7a928" stroke-width=".8"/><text x="1317" y="585.5" font-size="10" fill="#787878" font-family='"Liberation Sans", sans-serif' textLength="75" lengthAdjust="spacing" transform="rotate(-24.5 1317 585.5)" stroke="#f1f3f4" stroke-width="2.500" paint-order="stroke" stroke-linejoin="round">Paul-Zipp-Straße</text><text x="1329" y="645" font-size="12" fill="#3c4043" font-family='"Liberation Sans", sans-serif' textLength="103" lengthAdjust="spacing" transform="rotate(5 1329 645)">Heuchelheimer Str.</text><text x="1528" y="671" font-size="12" fill="#3c4043" font-family='"Liberation Sans", sans-serif' textLength="78" lengthAdjust="spacing" transform="rotate(-45 1528 671)">Rodheimer Str.</text><text x="1075" y="689" font-size="10" fill="#787878" font-family='"Liberation Sans", sans-serif' textLength="54" lengthAdjust="spacing" transform="rotate(43 1075 689)" stroke="#f1f3f4" stroke-width="2.500" paint-order="stroke" stroke-linejoin="round">Bahnstraße</text><text x="1059.5" y="781.5" font-size="12" fill="#3c4043" font-family='"Liberation Sans", sans-serif' textLength="74" lengthAdjust="spacing" transform="rotate(-35.5 1059.5 781.5)">Gießener Str.</text><path id="sp" d="M1122.500 741Q1141 768 1144.500 797" fill="none"/><text font-size="10" fill="#787878" font-family='"Liberation Sans", sans-serif' stroke="#f1f3f4" stroke-width="2.500" paint-order="stroke"><textPath href="#sp" textLength="61" lengthAdjust="spacing">Schillerstraße</textPath></text><text x="1272" y="723" font-size="12" fill="#3d7be0" font-family='"Liberation Sans", sans-serif' textLength="57" lengthAdjust="spacing" transform="rotate(90 1272 723)" stroke="#f1f3f4" stroke-width="2.500" paint-order="stroke" stroke-linejoin="round">Fohnbach</text><text x="986.5" y="869.5" font-size="11.5" fill="#666b70" font-family='"Liberation Sans", sans-serif' textLength="24.5" lengthAdjust="spacing" transform="rotate(-12 986.5 869.5)">traße</text><text x="1118" y="548" font-size="10" fill="#787878" font-family='"Liberation Sans", sans-serif' transform="rotate(80 1118 548)" stroke="#f1f3f4" stroke-width="2.500" paint-order="stroke" stroke-linejoin="round">ba</text><text x="996.5" y="585.5" font-size="13" fill="#5f7180" font-family='"Liberation Sans", sans-serif' text-anchor="end">be</text><text x="996.5" y="600" font-size="13" fill="#5f7180" font-family='"Liberation Sans", sans-serif' text-anchor="end">an</text><text x="1021" y="761" font-size="14" fill="#6c80d2" font-family='"Liberation Sans", sans-serif' text-anchor="end" stroke="#f1f3f4" stroke-width="2.500" paint-order="stroke" stroke-linejoin="round">Heuchelheim</text><text x="1035.5" y="793.5" font-size="16" fill="#202124" font-family='"Liberation Sans", sans-serif' text-anchor="end" stroke="#f1f3f4" stroke-width="2.500" paint-order="stroke" stroke-linejoin="round">Heuchelheim</text><text x="1579.5" y="657" font-size="15" fill="#5f7180" font-family='"Liberation Sans", sans-serif'>Messe Gießen</text><text x="1607.5" y="695.5" font-size="12" fill="#3c4043" font-family='"Liberation Sans", sans-serif'>Heuchelheimer Str.</text><text x="1059.5" y="671.5" font-size="13.5" fill="#e8710a" font-family='"Liberation Sans", sans-serif' textLength="46" lengthAdjust="spacing" stroke="#f1f3f4" stroke-width="2.500" paint-order="stroke" stroke-linejoin="round">Rustico</text><text x="1498.5" y="603" font-size="14.5" fill="#1a73e8" font-family='"Liberation Sans", sans-serif' textLength="20.5" lengthAdjust="spacing" stroke="#f1f3f4" stroke-width="2.500" paint-order="stroke" stroke-linejoin="round">Lidl</text><text x="1411.5" y="731" font-size="14" fill="#1a73e8" font-family='"Liberation Sans", sans-serif' textLength="96.5" lengthAdjust="spacing" stroke="#f1f3f4" stroke-width="2.500" paint-order="stroke" stroke-linejoin="round">Richter+Frenzel</text><text x="1305" y="771" font-size="14" fill="#1a73e8" font-family='"Liberation Sans", sans-serif' textLength="83.5" lengthAdjust="spacing" stroke="#f1f3f4" stroke-width="2.500" paint-order="stroke" stroke-linejoin="round">KERAMUNDO</text><text x="1191" y="803" font-size="14" fill="#1a73e8" font-family='"Liberation Sans", sans-serif' textLength="95" lengthAdjust="spacing" stroke="#f1f3f4" stroke-width="2.500" paint-order="stroke" stroke-linejoin="round">EQUIVA Gießen</text><text x="1421.5" y="823" font-size="14" fill="#1a73e8" font-family='"Liberation Sans", sans-serif' textLength="118.5" lengthAdjust="spacing" stroke="#f1f3f4" stroke-width="2.500" paint-order="stroke" stroke-linejoin="round">Fritz Berger Gießen</text><text x="1314.5" y="690" font-size="14" fill="#d3231f" font-family='"Liberation Sans", sans-serif' textLength="125" lengthAdjust="spacing" stroke="#f1f3f4" stroke-width="2.500" paint-order="stroke" stroke-linejoin="round">Friedrich-List-Straße</text><text x="1314.5" y="703.5" font-size="14" fill="#d3231f" font-family='"Liberation Sans", sans-serif' textLength="117" lengthAdjust="spacing" stroke="#f1f3f4" stroke-width="2.500" paint-order="stroke" stroke-linejoin="round">31, 35398 Gießen…</text><path d="M1398 740.0C1396 735.5 1388 730.0 1388 722.5A10 10 0 1 1 1408 722.5C1408 730.0 1400 735.5 1398 740.0z" fill="#4a96f0"/><rect x="1393.3" y="719.5" width="9.400" height="7.600" rx="1" fill="#fff"/><path d="M1396 719.5v-1.200a2 2 0 0 1 4 0v1.200" fill="none" stroke="#fff" stroke-width="1.300"/><path d="M1395.7 722.5q2.300 2.600 4.600 0" fill="none" stroke="#1a73e8" stroke-width="1.100"/><path d="M1402.5 780.0C1400.5 775.5 1392.5 770.0 1392.5 762.5A10 10 0 1 1 1412.5 762.5C1412.5 770.0 1404.5 775.5 1402.5 780.0z" fill="#4a96f0"/><rect x="1397.8" y="759.5" width="9.400" height="7.600" rx="1" fill="#fff"/><path d="M1400.5 759.5v-1.200a2 2 0 0 1 4 0v1.200" fill="none" stroke="#fff" stroke-width="1.300"/><path d="M1400.2 762.5q2.300 2.600 4.600 0" fill="none" stroke="#1a73e8" stroke-width="1.100"/><path d="M1299.5 812.0C1297.5 807.5 1289.5 802.0 1289.5 794.5A10 10 0 1 1 1309.5 794.5C1309.5 802.0 1301.5 807.5 1299.5 812.0z" fill="#4a96f0"/><rect x="1294.8" y="791.5" width="9.400" height="7.600" rx="1" fill="#fff"/><path d="M1297.5 791.5v-1.200a2 2 0 0 1 4 0v1.200" fill="none" stroke="#fff" stroke-width="1.300"/><path d="M1297.2 794.5q2.300 2.600 4.600 0" fill="none" stroke="#1a73e8" stroke-width="1.100"/><path d="M1408.5 832.0C1406.5 827.5 1398.5 822.0 1398.5 814.5A10 10 0 1 1 1418.5 814.5C1418.5 822.0 1410.5 827.5 1408.5 832.0z" fill="#4a96f0"/><rect x="1403.8" y="811.5" width="9.400" height="7.600" rx="1" fill="#fff"/><path d="M1406.5 811.5v-1.200a2 2 0 0 1 4 0v1.200" fill="none" stroke="#fff" stroke-width="1.300"/><path d="M1406.2 814.5q2.300 2.600 4.600 0" fill="none" stroke="#1a73e8" stroke-width="1.100"/><path d="M1533.5 611.0C1531.5 606.5 1523.5 601.0 1523.5 593.5A10 10 0 1 1 1543.5 593.5C1543.5 601.0 1535.5 606.5 1533.5 611.0z" fill="#4a96f0"/><path d="M1527.5 589.0h2l1.600 6.500h6.200l1.400-4.700h-8.700" fill="none" stroke="#fff" stroke-width="1.500" stroke-linejoin="round"/><path d="M1530.9 591.0h7l-1 3.500h-5z" fill="#fff"/><circle cx="1531.8" cy="597.7" r="1.200" fill="#fff"/><circle cx="1536.8" cy="597.7" r="1.200" fill="#fff"/><path d="M1606 576.0C1604 571.5 1596 566.0 1596 558.5A10 10 0 1 1 1616 558.5C1616 566.0 1608 571.5 1606 576.0z" fill="#4a96f0"/><path d="M1600 554.0h2l1.600 6.500h6.200l1.400-4.700h-8.700" fill="none" stroke="#fff" stroke-width="1.500" stroke-linejoin="round"/><path d="M1603.4 556.0h7l-1 3.500h-5z" fill="#fff"/><circle cx="1604.3" cy="562.7" r="1.200" fill="#fff"/><circle cx="1609.3" cy="562.7" r="1.200" fill="#fff"/><path d="M1322 877.5C1320 873.0 1312 867.5 1312 860A10 10 0 1 1 1332 860C1332 867.5 1324 873.0 1322 877.5z" fill="#4a96f0"/><path d="M1308 660.5C1306 656.0 1298 650.5 1298 643A10 10 0 1 1 1318 643C1318 650.5 1310 656.0 1308 660.5z" fill="#4a96f0"/><path d="M1118 681.0C1116 676.5 1108 671.0 1108 663.5A10 10 0 1 1 1128 663.5C1128 671.0 1120 676.5 1118 681.0z" fill="#ff9e2c"/><path d="M1114.200 656.500v4.500M1116 656.500v4.500M1114.200 660.500h1.800M1115.100 660.500v7.500" stroke="#fff" stroke-width="1.200" fill="none"/><path d="M1121 656.500c-1.600.5-1.800 3-1.600 5h1.600v6.500" stroke="#fff" stroke-width="1.300" fill="#fff"/><path d="M1033.5 769.0C1031.5 764.5 1023.5 759.0 1023.5 751.5A10 10 0 1 1 1043.5 751.5C1043.5 759.0 1035.5 764.5 1033.5 769.0z" fill="#7986cb"/><text x="1033.500" y="756.500" font-size="14" font-weight="700" fill="#fff" text-anchor="middle" font-family='"Liberation Sans", sans-serif'>€</text><path d="M1299 709.500C1297 700 1286.500 695 1286.500 685.500A12.500 12.500 0 0 1 1311.500 685.500C1311.500 695 1301 700 1299 709.500z" fill="#f3342a" stroke="#d3231f" stroke-width=".6"/><circle cx="1299" cy="686" r="4.400" fill="#a50e0e"/><text x="1276" y="846.500" font-size="16" font-family='"Liberation Sans", sans-serif' textLength="46" lengthAdjust="spacingAndGlyphs" stroke="#fff" stroke-width="2" paint-order="stroke"><tspan fill="#4285f4">G</tspan><tspan fill="#ea4335">o</tspan><tspan fill="#fbbc05">o</tspan><tspan fill="#4285f4">g</tspan><tspan fill="#34a853">l</tspan><tspan fill="#ea4335">e</tspan></text><rect x="996" y="815" width="42" height="42" rx="2.500" fill="#fff" filter="url(#sh)"/><rect x="998" y="817" width="38" height="38" fill="#465c45"/><rect x="1013.8" y="836.6" width="6.1" height="3.8" fill="#50604c" opacity=".8"/><rect x="1027.9" y="823.6" width="5.5" height="3.9" fill="#405840" opacity=".8"/><rect x="1001.3" y="827.6" width="2.0" height="5.5" fill="#3b533b" opacity=".8"/><rect x="1018.8" y="830.9" width="3.8" height="5.2" fill="#405840" opacity=".8"/><rect x="1019.8" y="846.1" width="1.8" height="1.7" fill="#57694f" opacity=".8"/><rect x="1019.0" y="844.2" width="3.1" height="4.5" fill="#57694f" opacity=".8"/><rect x="1016.2" y="839.4" width="4.0" height="4.8" fill="#384c3c" opacity=".8"/><rect x="1020.9" y="831.2" width="4.3" height="6.2" fill="#4d6549" opacity=".8"/><rect x="1022.8" y="828.0" width="2.6" height="2.9" fill="#4d6549" opacity=".8"/><rect x="1017.7" y="820.8" width="2.0" height="3.0" fill="#4d6549" opacity=".8"/><rect x="1031.5" y="846.7" width="1.5" height="2.5" fill="#3b533b" opacity=".8"/><rect x="1014.4" y="851.3" width="3.5" height="1.9" fill="#57694f" opacity=".8"/><rect x="1025.2" y="826.4" width="1.9" height="3.2" fill="#5e6f58" opacity=".8"/><rect x="1024.5" y="821.1" width="2.7" height="2.0" fill="#3b533b" opacity=".8"/><rect x="1014.3" y="834.0" width="4.9" height="2.4" fill="#50604c" opacity=".8"/><rect x="1004.7" y="842.6" width="2.2" height="4.7" fill="#4d6549" opacity=".8"/><rect x="1011.8" y="851.7" width="1.5" height="3.3" fill="#35493a" opacity=".8"/><rect x="1032.9" y="817.7" width="2.4" height="6.5" fill="#4d6549" opacity=".8"/><rect x="999.5" y="822.1" width="3.7" height="1.5" fill="#4a6046" opacity=".8"/><rect x="1027.1" y="830.5" width="1.9" height="2.5" fill="#57694f" opacity=".8"/><rect x="998.5" y="829.9" width="4.6" height="2.1" fill="#384c3c" opacity=".8"/><rect x="1027.1" y="821.8" width="3.4" height="4.6" fill="#35493a" opacity=".8"/><rect x="1029.8" y="845.6" width="2.7" height="2.4" fill="#50604c" opacity=".8"/><rect x="1004.9" y="850.3" width="5.9" height="4.5" fill="#5e6f58" opacity=".8"/><rect x="999.7" y="820.8" width="4.1" height="2.8" fill="#5e6f58" opacity=".8"/><rect x="1007.0" y="845.8" width="4.5" height="3.0" fill="#405840" opacity=".8"/><rect x="1030.5" y="851.2" width="2.1" height="3.8" fill="#4d6549" opacity=".8"/><rect x="1007.8" y="849.1" width="2.5" height="1.6" fill="#35493a" opacity=".8"/><rect x="1012.4" y="825.7" width="1.7" height="2.9" fill="#50604c" opacity=".8"/><rect x="1018.0" y="821.6" width="3.3" height="6.0" fill="#4a6046" opacity=".8"/><rect x="1021.0" y="841.2" width="4.4" height="2.2" fill="#3b533b" opacity=".8"/><rect x="1030.3" y="833.6" width="3.3" height="3.1" fill="#3b533b" opacity=".8"/><rect x="998.7" y="839.3" width="3.9" height="5.2" fill="#4a6046" opacity=".8"/><rect x="1002.8" y="819.5" width="3.8" height="3.3" fill="#3b533b" opacity=".8"/><rect x="1029.5" y="842.8" width="5.0" height="5.5" fill="#4a6046" opacity=".8"/><rect x="1010.3" y="841.0" width="6.0" height="5.9" fill="#5e6f58" opacity=".8"/><rect x="1031.0" y="818.1" width="4.0" height="1.6" fill="#5e6f58" opacity=".8"/><rect x="1011.3" y="817.4" width="1.9" height="2.0" fill="#4d6549" opacity=".8"/><rect x="1032.8" y="847.8" width="3.2" height="3.4" fill="#384c3c" opacity=".8"/><rect x="1013.4" y="846.3" width="1.9" height="5.3" fill="#3b533b" opacity=".8"/><rect x="1008.9" y="820.1" width="1.6" height="6.3" fill="#4d6549" opacity=".8"/><rect x="1015.4" y="838.5" width="6.1" height="2.8" fill="#3b533b" opacity=".8"/><rect x="1010.9" y="822.0" width="4.6" height="4.1" fill="#4a6046" opacity=".8"/><rect x="1021.1" y="832.5" width="6.0" height="3.1" fill="#35493a" opacity=".8"/><rect x="1004.9" y="832.1" width="5.5" height="6.1" fill="#57694f" opacity=".8"/><rect x="1011.5" y="837.4" width="3.1" height="2.2" fill="#384c3c" opacity=".8"/><rect x="1010.3" y="848.3" width="1.7" height="1.8" fill="#35493a" opacity=".8"/><rect x="1026.8" y="820.9" width="3.9" height="6.1" fill="#5e6f58" opacity=".8"/><rect x="1011.4" y="835.2" width="4.9" height="5.1" fill="#384c3c" opacity=".8"/><rect x="1009.2" y="846.0" width="2.9" height="4.5" fill="#35493a" opacity=".8"/><rect x="1018.0" y="827.8" width="5.5" height="1.6" fill="#405840" opacity=".8"/><rect x="1012.2" y="823.6" width="5.3" height="2.8" fill="#405840" opacity=".8"/><rect x="1025.9" y="851.4" width="2.1" height="2.0" fill="#50604c" opacity=".8"/><rect x="1020.9" y="845.3" width="6.3" height="4.9" fill="#57694f" opacity=".8"/><rect x="1026.8" y="826.0" width="5.1" height="5.3" fill="#50604c" opacity=".8"/><rect x="1023.0" y="823.3" width="2.9" height="3.2" fill="#50604c" opacity=".8"/><rect x="1015.5" y="851.9" width="2.3" height="3.1" fill="#57694f" opacity=".8"/><rect x="1001.1" y="849.6" width="5.1" height="2.1" fill="#384c3c" opacity=".8"/><rect x="1004.9" y="848.1" width="1.5" height="4.3" fill="#50604c" opacity=".8"/><rect x="1025.9" y="850.0" width="3.8" height="4.8" fill="#57694f" opacity=".8"/><rect x="1001.5" y="847.3" width="5.5" height="6.1" fill="#4d6549" opacity=".8"/><rect x="1005.5" y="848.5" width="6.4" height="6.4" fill="#50604c" opacity=".8"/><rect x="1032.2" y="849.6" width="2.8" height="5.1" fill="#3b533b" opacity=".8"/><rect x="1010.2" y="819.9" width="3.7" height="4.3" fill="#35493a" opacity=".8"/><rect x="1015.1" y="818.0" width="5.5" height="1.8" fill="#3b533b" opacity=".8"/><rect x="1004.1" y="828.7" width="5.4" height="2.2" fill="#405840" opacity=".8"/><rect x="1033.0" y="848.5" width="3.0" height="4.9" fill="#384c3c" opacity=".8"/><rect x="1031.1" y="834.2" width="4.9" height="1.9" fill="#57694f" opacity=".8"/><rect x="1013.4" y="836.6" width="5.7" height="4.3" fill="#405840" opacity=".8"/><rect x="1016.3" y="846.5" width="4.3" height="3.1" fill="#5e6f58" opacity=".8"/><path d="M1009.500 817l2.500 38h3l-1.500-38z" fill="#5b6a4a" opacity=".7"/><rect x="1015.500" y="829" width="20.500" height="26" fill="#5d6f62" opacity=".75"/><rect x="1033.2" y="850.4" width="2.5" height="1.3" fill="#c3cdc4" opacity=".75"/><rect x="1033.4" y="842.1" width="2.4" height="1.1" fill="#8fa091" opacity=".75"/><rect x="1018.1" y="829.6" width="1.9" height="1.7" fill="#dfe5dd" opacity=".75"/><rect x="1025.3" y="839.1" width="2.9" height="1.7" fill="#a9b7ab" opacity=".75"/><rect x="1017.7" y="833.5" width="3.2" height="1.5" fill="#a9b7ab" opacity=".75"/><rect x="1020.8" y="840.9" width="1.3" height="1.5" fill="#a9b7ab" opacity=".75"/><rect x="1025.4" y="832.1" width="2.0" height="0.8" fill="#f2f4f0" opacity=".75"/><rect x="1018.3" y="848.2" width="1.1" height="1.1" fill="#c3cdc4" opacity=".75"/><rect x="1016.2" y="836.3" width="2.7" height="1.2" fill="#a9b7ab" opacity=".75"/><rect x="1017.9" y="847.0" width="1.3" height="1.6" fill="#f2f4f0" opacity=".75"/><rect x="1028.9" y="846.3" width="3.1" height="0.8" fill="#a9b7ab" opacity=".75"/><rect x="1030.9" y="844.3" width="2.3" height="2.2" fill="#8fa091" opacity=".75"/><rect x="1027.5" y="842.2" width="3.0" height="1.8" fill="#c3cdc4" opacity=".75"/><rect x="1020.2" y="847.3" width="2.9" height="2.2" fill="#f2f4f0" opacity=".75"/><rect x="1026.9" y="850.9" width="1.5" height="2.0" fill="#c3cdc4" opacity=".75"/><rect x="1032.0" y="832.7" width="1.6" height="2.0" fill="#f2f4f0" opacity=".75"/><rect x="1023.0" y="839.9" width="3.3" height="1.7" fill="#c3cdc4" opacity=".75"/><rect x="1019.6" y="844.6" width="2.9" height="1.0" fill="#8fa091" opacity=".75"/><rect x="1028.3" y="851.4" width="3.3" height="1.0" fill="#8fa091" opacity=".75"/><rect x="1027.4" y="837.7" width="3.4" height="2.1" fill="#dfe5dd" opacity=".75"/><rect x="1024.7" y="830.1" width="2.8" height="1.8" fill="#8fa091" opacity=".75"/><rect x="1024.7" y="834.0" width="1.3" height="1.1" fill="#c3cdc4" opacity=".75"/><rect x="1033.8" y="851.7" width="1.2" height="0.9" fill="#a9b7ab" opacity=".75"/><rect x="1017.4" y="831.8" width="1.9" height="1.5" fill="#f2f4f0" opacity=".75"/><rect x="1023.7" y="843.9" width="1.0" height="1.9" fill="#c3cdc4" opacity=".75"/><rect x="1019.3" y="840.4" width="2.8" height="1.4" fill="#c3cdc4" opacity=".75"/><rect x="1026.9" y="831.8" width="2.9" height="1.3" fill="#dfe5dd" opacity=".75"/><rect x="1030.4" y="846.4" width="3.1" height="1.8" fill="#a9b7ab" opacity=".75"/><rect x="1026.3" y="834.1" width="2.4" height="1.3" fill="#f2f4f0" opacity=".75"/><rect x="1021.0" y="832.3" width="2.8" height="1.1" fill="#a9b7ab" opacity=".75"/><rect x="1018.4" y="837.4" width="2.3" height="1.4" fill="#a9b7ab" opacity=".75"/><rect x="1029.8" y="839.2" width="2.7" height="0.9" fill="#f2f4f0" opacity=".75"/><rect x="1021.4" y="831.9" width="3.1" height="2.4" fill="#8fa091" opacity=".75"/><rect x="1016.9" y="836.1" width="3.3" height="1.3" fill="#c3cdc4" opacity=".75"/><rect x="1020.500" y="836" width="4.200" height="2" fill="#f4f6f2"/><rect x="1027.500" y="836" width="4" height="2" fill="#eef1ec"/><path d="M998 829l38-2" stroke="#55694c" stroke-width="1" opacity=".5"/><rect x="1022" y="855" width="589" height="12" fill="#fff" fill-opacity=".72"/><text x="1027.5" y="865" font-size="10" fill="#111" font-family='"Liberation Sans", sans-serif' textLength="52.5" lengthAdjust="spacing">Kurzbefehle</text><text x="1092" y="865" font-size="10" fill="#111" font-family='"Liberation Sans", sans-serif' textLength="248.5" lengthAdjust="spacing">Kartendaten © 2022 GeoBasis-DE/BKG (©2009), Google</text><text x="1353" y="865" font-size="10" fill="#111" font-family='"Liberation Sans", sans-serif' textLength="100" lengthAdjust="spacing">Nutzungsbedingungen</text><text x="1465" y="865" font-size="10" fill="#111" font-family='"Liberation Sans", sans-serif' textLength="140" lengthAdjust="spacing">Fehler bei Google Maps melden</text><rect x="1561" y="763" width="40" height="81" rx="2" fill="#fff" filter="url(#sh)"/><path d="M1566.500 803.500h29" stroke="#e6e6e6" stroke-width="1"/><path d="M1572 783h18M1581 774v18" stroke="#666" stroke-width="3.400"/><path d="M1572 824h18" stroke="#666" stroke-width="3.400"/><circle cx="1609" cy="825" r="20.500" fill="#fff" fill-opacity=".92" filter="url(#sh)"/><path d="M1611 825h-10M1606 819.500l-5.500 5.500 5.500 5.500" fill="none" stroke="#777" stroke-width="1.500"/><rect x="996" y="557" width="319" height="100" rx="2" fill="#fff" filter="url(#sh)"/><text x="1008" y="580" font-size="14" font-weight="700" fill="#111" font-family='"Liberation Sans", sans-serif' textLength="147" lengthAdjust="spacing">Friedrich-List-Straße 31</text><text x="1008" y="601" font-size="12.500" fill="#5b5b5b" font-family='"Liberation Sans", sans-serif' textLength="162.500" lengthAdjust="spacing">Friedrich-List-Straße 31, 35398</text><text x="1008" y="615" font-size="12.500" fill="#5b5b5b" font-family='"Liberation Sans", sans-serif' textLength="37.500" lengthAdjust="spacing">Gießen</text><text x="1008" y="644" font-size="12.500" fill="#1a73e8" font-family='"Liberation Sans", sans-serif' textLength="122.500" lengthAdjust="spacing">Größere Karte ansehen</text><text x="1225" y="605" font-size="12.500" fill="#1a73e8" font-family='"Liberation Sans", sans-serif' textLength="70.500" lengthAdjust="spacing">Routenplaner</text><path d="M1252 573l3-1.500 6.500 7v2.500h-2.500z" fill="#a8cdf0"/><path d="M1258.200 588.500v-8.500l5.600-5.300-3.300-2.700h8.500v8.500l-2.800-3.200-4.700 4.600v6.600z" fill="#4a96dd"/></g></svg>
<div class="a" style="left:21px;top:879px;width:1894px;height:1px;background:#e2e1de;"></div>
<div class="a" style="left:21px;top:880px;width:1894px;height:45px;background:#fdfdfd;"></div>
<div class="a" style="left:22px;top:922.5px;width:217px;height:2.5px;background:#254a8f;"></div>
<svg class="a" style="left:954.5px;top:882.5px;" width="8" height="5" viewBox="0 0 8 5"><path d="M.4 .5L4 4.200 7.600 .5" fill="none" stroke="#aaa6a0" stroke-width="1.300"/></svg>
<svg class="a" style="left:977.7px;top:882.5px;" width="8" height="5" viewBox="0 0 8 5"><path d="M.4 4.500L4 .8l3.600 3.700" fill="none" stroke="#aaa6a0" stroke-width="1.300"/></svg>
<div class="a" style="left:1907.5px;top:892px;width:1px;height:33px;background:#ececea;"></div>
<svg class="a" style="left:1910px;top:903px;" width="5" height="10" viewBox="0 0 5 10"><path d="M5.500 1L1.500 5l4 4" fill="none" stroke="#173f83" stroke-width="1.500"/></svg>
<svg class="a" style="left:30.5px;top:900px;" width="14.5" height="14.5" viewBox="0 0 14 14"><path d="M0 14V7.300l4.500-2.900v2.100l4.500-2.700v2.300h1.400V14z" fill="#706d68"/><path d="M10.400 0h3.500v14h-3.500z" fill="#4e4e4c"/><g fill="#c8c8ff"><rect x="1.500" y="8" width="1.600" height="1.500"/><rect x="4.500" y="8" width="1.600" height="1.500"/><rect x="7.500" y="8" width="1.600" height="1.500"/><rect x="1.500" y="10.900" width="1.600" height="1.500"/><rect x="4.500" y="10.900" width="1.600" height="1.500"/><rect x="7.500" y="10.900" width="1.600" height="1.500"/></g></svg>
<span class="t" style="left:52px;top:899.3px;font-size:12.5px;line-height:18px;color:#1a1a1a;transform:scaleX(0.8676);">ANLAGEVERKNÜPFUNGEN (0)</span>
<svg class="a" style="left:221.5px;top:902.5px;" width="8" height="8" viewBox="0 0 8 8"><path d="M1.200 1.200l5.600 5.600M6.800 1.200L1.200 6.800" stroke="#173f83" stroke-width="2"/></svg>
<svg class="a" style="left:254.5px;top:898.5px;" width="13.5" height="17" viewBox="0 0 13.5 17"><rect x=".7" y="2.500" width="11.400" height="13.600" rx="1.300" fill="#fff" stroke="#3d5560" stroke-width="1.250"/><circle cx="6.400" cy="1.700" r="1.050" fill="#fff" stroke="#8ea0a8" stroke-width=".9"/><path d="M3 2h6.800l.6 1.600c-.3 1-1 1.400-2 1.400H4.400c-1 0-1.700-.4-2-1.400z" fill="#8ea0a8"/><path d="M3.200 9.800l2.400 2.500 4.300-5.500" fill="none" stroke="#15b045" stroke-width="1.900"/></svg>
<span class="t" style="left:275px;top:899.3px;font-size:12.5px;line-height:18px;color:#8c8c8c;transform:scaleX(0.8406);">AKTIVITÄTEN (0)</span>
<svg class="a" style="left:369.5px;top:902.5px;" width="8" height="8" viewBox="0 0 8 8"><path d="M1.200 1.200l5.600 5.600M6.800 1.200L1.200 6.800" stroke="#173f83" stroke-width="2"/></svg>
<svg class="a" style="left:401.5px;top:898.5px;" width="14" height="17" viewBox="0 0 14 17"><rect x="4" y="1.200" width="10" height="12.300" fill="#c9c5bd"/><g fill="#1e9af0"><rect x="5.3" y="2.3" width="2" height="1.300"/><rect x="5.3" y="4.5" width="2" height="1.300"/><rect x="5.3" y="6.7" width="2" height="1.300"/><rect x="5.3" y="8.9" width="2" height="1.300"/><rect x="5.3" y="11.1" width="2" height="1.300"/><rect x="8.2" y="2.3" width="2" height="1.300"/><rect x="8.2" y="4.5" width="2" height="1.300"/><rect x="8.2" y="6.7" width="2" height="1.300"/><rect x="8.2" y="8.9" width="2" height="1.300"/><rect x="8.2" y="11.1" width="2" height="1.300"/><rect x="11.1" y="2.3" width="2" height="1.300"/><rect x="11.1" y="4.5" width="2" height="1.300"/><rect x="11.1" y="6.7" width="2" height="1.300"/><rect x="11.1" y="8.9" width="2" height="1.300"/><rect x="11.1" y="11.1" width="2" height="1.300"/></g><path d="M.8 16.600c0-2.600 1.600-3.800 4.900-3.800s4.900 1.200 4.900 3.800z" fill="#2848b8"/><path d="M5 12.900h1.400l-.2 3.400h-1z" fill="#e03a2a"/><circle cx="5.700" cy="10" r="2.600" fill="#f5a030"/><path d="M3 9.600c-.2-2.200 1.200-3.200 2.700-3.200s2.900 1 2.700 3.200c-.9-1.200-1.800-1.500-2.700-1.500s-1.800.3-2.700 1.500z" fill="#4e3422"/></svg>
<span class="t" style="left:423px;top:899.3px;font-size:12.5px;line-height:18px;color:#8c8c8c;transform:scaleX(0.8326);">GESCHÄFTSPARTNER (1)</span>
<svg class="a" style="left:562px;top:902.5px;" width="8" height="8" viewBox="0 0 8 8"><path d="M1.200 1.200l5.600 5.600M6.800 1.200L1.200 6.800" stroke="#173f83" stroke-width="2"/></svg>
<svg class="a" style="left:593.5px;top:899px;" width="13" height="16.5" viewBox="0 0 13 16.5"><path d="M1 .8h7.400L12 4.400v11.300H1z" fill="#f7fafb" stroke="#6b7f8a" stroke-width="1.100"/><path d="M8.200 .8v3.800H12" fill="none" stroke="#6b7f8a" stroke-width="1"/></svg>
<span class="t" style="left:614px;top:899.3px;font-size:12.5px;line-height:18px;color:#8c8c8c;transform:scaleX(0.8771);">DOKUMENTE (0)</span>
<svg class="a" style="left:712px;top:902.5px;" width="8" height="8" viewBox="0 0 8 8"><path d="M1.200 1.200l5.600 5.600M6.800 1.200L1.200 6.800" stroke="#173f83" stroke-width="2"/></svg>
<svg class="a" style="left:743px;top:898.5px;" width="16" height="16" viewBox="0 0 14 14"><rect x="10.600" y="2.600" width="1.700" height="3.400" fill="#eef0f8"/><path d="M7 2.200L1.300 7.600V14h11.400V7.600z" fill="#f1f3fb"/><path d="M1.300 12.300h11.400V14H1.300z" fill="#dcdcf4"/><path d="M7 .3L.1 6.900l1 1L7 2.300l5.900 5.600 1-1z" fill="#d8403a"/><rect x="5" y="9.200" width="4" height="4.800" fill="#ff3d00"/><rect x="6.200" y="5" width="1.600" height="1.700" fill="#1c3f7c"/></svg>
<span class="t" style="left:765px;top:899.3px;font-size:12.5px;line-height:18px;color:#8c8c8c;transform:scaleX(0.8381);">ANSCHLUSSOBJEKTE (1)</span>
<svg class="a" style="left:904px;top:902.5px;" width="8" height="8" viewBox="0 0 8 8"><path d="M1.200 1.200l5.600 5.600M6.800 1.200L1.200 6.800" stroke="#173f83" stroke-width="2"/></svg>
<svg class="a" style="left:934.5px;top:899.6px;" width="16.5" height="14.6" viewBox="0 0 17 15"><rect x=".8" y=".7" width="15.400" height="13.600" rx="1.400" fill="#fdfdfd" stroke="#4a5a60" stroke-width="1.300"/><rect x="2.600" y="2.500" width="11.200" height="3" rx=".5" fill="#22dc35"/><rect x="2.200" y="6.400" width="12.600" height="3.800" fill="#eceeee"/><circle cx="7" cy="7.300" r=".7" fill="#ff5d7d"/><circle cx="9" cy="7.300" r=".7" fill="#ff5d7d"/><circle cx="11.600" cy="8.100" r="1.500" fill="#3a454a"/><path d="M.8 7.300h1M15.200 7.300h1" stroke="#4a5a60" stroke-width="1.800"/><rect x="3.400" y="10.800" width="9.800" height="3" fill="#c8a81c"/><path d="M4.700 10.600v3.300M7 10.600v3.300M9.300 10.600v3.300M11.600 10.600v3.300" stroke="#ffd21f" stroke-width="1.500"/></svg>
<span class="t" style="left:957px;top:899.3px;font-size:12.5px;line-height:18px;color:#8c8c8c;transform:scaleX(0.8620);">MESSEINRICHTUNGEN (0)</span>
<svg class="a" style="left:1104.5px;top:902.5px;" width="8" height="8" viewBox="0 0 8 8"><path d="M1.200 1.200l5.600 5.600M6.800 1.200L1.200 6.800" stroke="#173f83" stroke-width="2"/></svg>
<svg class="a" style="left:1137px;top:900px;" width="14" height="14" viewBox="0 0 14 14"><path d="M0 0h14v10.500L10.500 14H0z" fill="#fdb913"/><path d="M14 10.500L10.500 14v-3.500z" fill="#fff3c4"/><path d="M2 3.200h10M2 5.600h10M2 8h6" stroke="#f59a00" stroke-width=".9"/></svg>
<span class="t" style="left:1158.5px;top:899.3px;font-size:12.5px;line-height:18px;color:#8c8c8c;transform:scaleX(0.8695);">NOTIZEN (0)</span>
<svg class="a" style="left:1233.5px;top:902.5px;" width="8" height="8" viewBox="0 0 8 8"><path d="M1.200 1.200l5.600 5.600M6.800 1.200L1.200 6.800" stroke="#173f83" stroke-width="2"/></svg>
<svg class="a" style="left:1264px;top:898.5px;" width="18" height="17" viewBox="0 0 18 17"><rect x="2.900" y="2.400" width="8.900" height="9.300" fill="#d9e0e1"/><rect x=".9" y=".3" width="13.300" height="2.200" rx=".4" fill="#8a9fa8"/><rect x=".9" y=".3" width="1.100" height="2.200" fill="#f08a1c"/><rect x="13.100" y=".3" width="1.100" height="2.200" fill="#f08a1c"/><path d="M7 4.100h4M7 6.100h4M7 8.100h4" stroke="#8a9fa8" stroke-width="1"/><rect x="2" y="11.500" width="7" height="2" rx=".4" fill="#8a9fa8"/><circle cx="12.600" cy="11.900" r="4.100" fill="#fff" stroke="#1fa0e0" stroke-width="1.300"/><path d="M12 9.800l.8 2.300-1 1.400" fill="none" stroke="#4a3a3a" stroke-width=".9"/></svg>
<span class="t" style="left:1287.5px;top:899.3px;font-size:12.5px;line-height:18px;color:#8c8c8c;transform:scaleX(0.8765);">ANLAGEN-ZEITDATEN (0)</span>
<svg class="a" style="left:1431.5px;top:902.5px;" width="8" height="8" viewBox="0 0 8 8"><path d="M1.200 1.200l5.600 5.600M6.800 1.200L1.200 6.800" stroke="#173f83" stroke-width="2"/></svg>
<svg class="a" style="left:1463.5px;top:899px;" width="13" height="16.5" viewBox="0 0 13 16.5"><path d="M.8 .7h8.200l3.200 3.200v11.600H.8z" fill="#f4f7f8" stroke="#5c7a86" stroke-width="1.100"/><rect x="2.600" y="2.600" width="4.600" height="2" fill="#c7d94a"/><path d="M2.800 7h3M7.200 7h3M2.800 9.400h3M7.200 9.400h3M2.800 11.800h3M7.200 11.800h3M2.800 13.800h3" stroke="#5c7a86" stroke-width="1"/></svg>
<span class="t" style="left:1484px;top:899.3px;font-size:12.5px;line-height:18px;color:#8c8c8c;transform:scaleX(0.8734);">ABRECHNUNGSDATEN (0)</span>
<svg class="a" style="left:1633px;top:902.5px;" width="8" height="8" viewBox="0 0 8 8"><path d="M1.200 1.200l5.600 5.600M6.800 1.200L1.200 6.800" stroke="#173f83" stroke-width="2"/></svg>
<svg class="a" style="left:1663.5px;top:898.5px;" width="17" height="17" viewBox="0 0 17 17"><g transform="scale(.82)"><path d="M.8 .7h8.200l3.200 3.200v11.600H.8z" fill="#f4f7f8" stroke="#5c7a86" stroke-width="1.100"/><rect x="2.600" y="2.600" width="4.600" height="2" fill="#c7d94a"/><path d="M2.800 7h3M7.200 7h3M2.800 9.400h3M7.200 9.400h3M2.800 11.800h3M7.200 11.800h3M2.800 13.800h3" stroke="#5c7a86" stroke-width="1"/></g><path d="M9.500 9v5.400" stroke="#1e9a3c" stroke-width="1.700"/><path d="M6.900 12.600h5.200L9.500 16z" fill="#1e9a3c"/><path d="M14 15.500V8.800" stroke="#1e9a3c" stroke-width="1.700"/><path d="M11.400 9.800h5.200L14 6.200z" fill="#1e9a3c"/></svg>
<span class="t" style="left:1686.5px;top:899.3px;font-size:12.5px;line-height:18px;color:#8c8c8c;transform:scaleX(0.8155);">WECHSELBELEGE (0)</span>
<svg class="a" style="left:1804.5px;top:902.5px;" width="8" height="8" viewBox="0 0 8 8"><path d="M1.200 1.200l5.600 5.600M6.800 1.200L1.200 6.800" stroke="#173f83" stroke-width="2"/></svg>
</body></html>
